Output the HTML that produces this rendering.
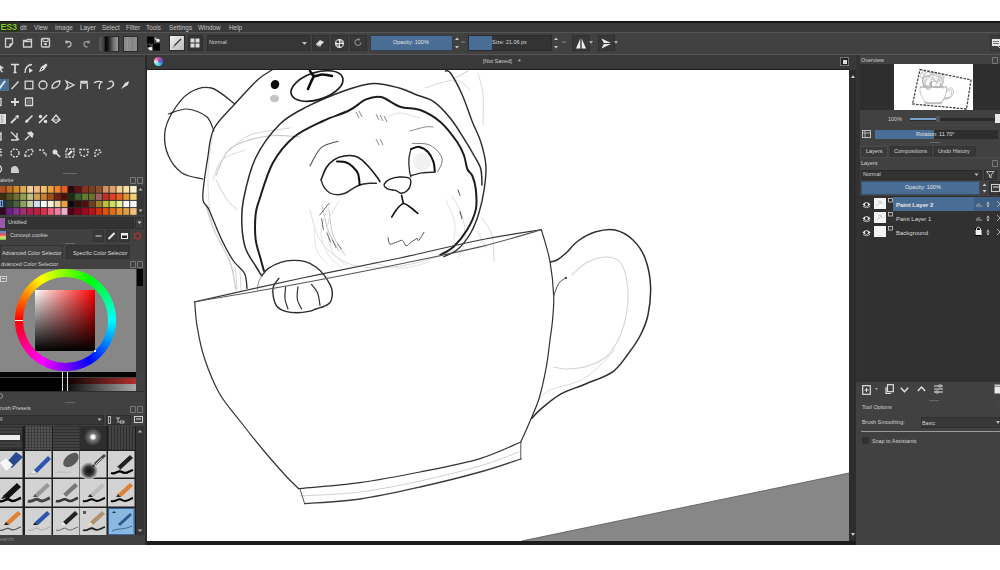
<!DOCTYPE html>
<html><head><meta charset="utf-8">
<style>
*{margin:0;padding:0;box-sizing:border-box}
html,body{width:1000px;height:570px;overflow:hidden;background:#fff;font-family:"Liberation Sans",sans-serif}
.a{position:absolute}
.t{position:absolute;white-space:nowrap;line-height:1}
svg{overflow:visible}
</style></head><body>
<div class="a" style="left:0px;top:21px;width:1000px;height:524px;background:#3a3a3a;"></div>
<div class="a" style="left:0px;top:21px;width:1000px;height:11px;background:#393939;border-top:2px solid #161616"></div>
<div class="a" style="left:0px;top:22px;width:20px;height:10px;background:#2a3420;"></div>
<div class="t" style="left:0.5px;top:22.5px;font-size:9px;color:#8cc43a;font-weight:bold;letter-spacing:-0.3px;text-shadow:0 0 1px #000">ES3</div>
<div class="t" style="left:20px;top:25px;font-size:6.4px;color:#c4c4c4;">dit</div>
<div class="t" style="left:34px;top:25px;font-size:6.4px;color:#c4c4c4;">View</div>
<div class="t" style="left:55px;top:25px;font-size:6.4px;color:#c4c4c4;">Image</div>
<div class="t" style="left:80px;top:25px;font-size:6.4px;color:#c4c4c4;">Layer</div>
<div class="t" style="left:102px;top:25px;font-size:6.4px;color:#c4c4c4;">Select</div>
<div class="t" style="left:126px;top:25px;font-size:6.4px;color:#c4c4c4;">Filter</div>
<div class="t" style="left:146px;top:25px;font-size:6.4px;color:#c4c4c4;">Tools</div>
<div class="t" style="left:169px;top:25px;font-size:6.4px;color:#c4c4c4;">Settings</div>
<div class="t" style="left:198px;top:25px;font-size:6.4px;color:#c4c4c4;">Window</div>
<div class="t" style="left:229px;top:25px;font-size:6.4px;color:#c4c4c4;">Help</div>
<div class="a" style="left:0px;top:32px;width:1000px;height:23px;background:#414141;border-top:1px solid #545454"></div>
<div class="a" style="left:0px;top:54px;width:1000px;height:1px;background:#565656;"></div>
<svg class="a" style="left:4px;top:37px;" width="10" height="11" viewBox="0 0 10 11"><path d="M1.5 1.5h7v5l-3 3.5h-4z" fill="none" stroke="#cfcfcf" stroke-width="1.3"/><path d="M5.5 10l3-3.5h-3z" fill="#eee"/></svg>
<svg class="a" style="left:22px;top:37px;" width="11" height="11" viewBox="0 0 11 11"><path d="M1.5 3.5h3l1 -1h4v7.5h-8z" fill="none" stroke="#cfcfcf" stroke-width="1.3"/><path d="M1.5 4.5h8" stroke="#cfcfcf" stroke-width="1.3"/></svg>
<svg class="a" style="left:40px;top:37px;" width="11" height="11" viewBox="0 0 11 11"><rect x="1.5" y="1.5" width="8" height="8.5" rx="1" fill="none" stroke="#cfcfcf" stroke-width="1.3"/><path d="M3 2v2.5h5V2" fill="none" stroke="#cfcfcf" stroke-width="1"/><circle cx="5.5" cy="7" r="1.3" fill="#ddd"/></svg>
<svg class="a" style="left:64px;top:38px;" width="9" height="10" viewBox="0 0 9 10"><path d="M2 2.5 v2 h2 M2 4.5 C3 3 7 3 7 6 C7 8.5 5 9 3.5 9" fill="none" stroke="#bdbdbd" stroke-width="1.3"/></svg>
<svg class="a" style="left:82px;top:38px;" width="9" height="10" viewBox="0 0 9 10"><path d="M7 2.5 v2 h-2 M7 4.5 C6 3 2 3 2 6 C2 8.5 4 9 5.5 9" fill="none" stroke="#9a9a9a" stroke-width="1.3"/></svg>
<div class="a" style="left:99px;top:37px;width:3px;height:14px;background:#555;"></div>
<div class="a" style="left:104px;top:36px;width:15px;height:16px;background:linear-gradient(90deg,#050505,#111 20%,#777 70%,#999);border:1px solid #2a2a2a"></div>
<div class="a" style="left:123px;top:36px;width:15px;height:16px;background:#8a8a8a;border:1px solid #2a2a2a"></div>
<div class="a" style="left:127px;top:37px;width:1px;height:14px;background:#9a9a9a;"></div>
<div class="a" style="left:132px;top:37px;width:1px;height:14px;background:#7e7e7e;"></div>
<svg class="a" style="left:147px;top:36px;" width="13" height="15" viewBox="0 0 13 15"><rect x="0" y="0.5" width="7" height="7" fill="#000"/><rect x="6" y="7.5" width="7" height="7" fill="#000"/><path d="M7.5 1 l3 2.5 -2 0.5z" fill="#eee"/><circle cx="11" cy="4.5" r="1.8" fill="#eee"/><path d="M1 11.5 a3 3 0 0 0 4.5 2.5 l-0.5 -3z" fill="#eee"/><circle cx="1.5" cy="10" r="1.2" fill="#000"/></svg>
<div class="a" style="left:169px;top:35px;width:16px;height:16px;background:linear-gradient(135deg,#f2f2f2,#cfcfcf 60%,#bbb);border:1px solid #2a2a2a"></div>
<svg class="a" style="left:171px;top:37px;" width="12" height="12" viewBox="0 0 12 12"><path d="M3 9 L10 2" stroke="#333" stroke-width="1.3"/><path d="M2 11 l2-3" stroke="#888" stroke-width="1"/></svg>
<div class="a" style="left:188px;top:35px;width:15px;height:16px;background:#353535;border:1px solid #2e2e2e"></div>
<svg class="a" style="left:190px;top:38px;" width="11" height="10" viewBox="0 0 11 10"><rect x="0.5" y="0.5" width="4" height="4" fill="#ddd"/><rect x="5.5" y="0.5" width="4" height="4" fill="#ddd"/><rect x="0.5" y="5.5" width="4" height="4" fill="#ddd"/><rect x="5.5" y="5.5" width="4" height="4" fill="#ddd"/></svg>
<div class="a" style="left:207px;top:35px;width:103px;height:16px;background:#363636;border:1px solid #2e2e2e"></div>
<div class="t" style="left:209px;top:40px;font-size:5.5px;color:#c9c9c9;">Normal</div>
<svg class="a" style="left:302px;top:42px;" width="5" height="3" viewBox="0 0 5 3"><path d="M0 0h5l-2.5 3z" fill="#bbb"/></svg>
<div class="a" style="left:312px;top:35px;width:17px;height:16px;background:#383838;border:1px solid #303030"></div>
<svg class="a" style="left:315px;top:38px;" width="10" height="9" viewBox="0 0 10 9"><path d="M1 6 L5 2 L9 4 L5 8z" fill="#e0e0e0"/><path d="M1 6 L3 8 h3" stroke="#bbb" fill="none"/></svg>
<div class="a" style="left:331px;top:35px;width:17px;height:16px;background:#383838;border:1px solid #303030"></div>
<svg class="a" style="left:334px;top:38px;" width="11" height="11" viewBox="0 0 11 11"><circle cx="5.5" cy="5.5" r="4.5" fill="#e8e8e8"/><rect x="2.5" y="2.5" width="2.5" height="2.5" fill="#333"/><rect x="6" y="6" width="2.5" height="2.5" fill="#333"/><rect x="6" y="2.5" width="2.5" height="2.5" fill="#888"/><rect x="2.5" y="6" width="2.5" height="2.5" fill="#888"/></svg>
<div class="a" style="left:350px;top:35px;width:17px;height:16px;background:#383838;border:1px solid #303030"></div>
<svg class="a" style="left:354px;top:38px;" width="9" height="9" viewBox="0 0 9 9"><path d="M7 4.5 A3 3 0 1 1 5 1.5" fill="none" stroke="#8c8c8c" stroke-width="1.2"/><path d="M4 0 l2.5 1.5 -2.5 1.5z" fill="#8c8c8c"/></svg>
<div class="a" style="left:370px;top:35px;width:83px;height:16px;background:#4a6d96;border:1px solid #2f3d4c"></div>
<div class="t" style="left:393px;top:40px;font-size:5.5px;color:#e6e6e6;">Opacity: 100%</div>
<svg class="a" style="left:454px;top:36px;" width="6" height="14" viewBox="0 0 6 14"><path d="M1 4 l2-2.5 2 2.5z M1 10 l2 2.5 2-2.5z" fill="#c8c8c8"/></svg>
<svg class="a" style="left:461px;top:42px;" width="4" height="2" viewBox="0 0 4 2"><path d="M0 0h4" stroke="#888"/></svg>
<div class="a" style="left:468px;top:35px;width:84px;height:16px;background:#333;border:1px solid #2a2a2a"></div>
<div class="a" style="left:469px;top:36px;width:23px;height:14px;background:#4a6d96;"></div>
<div class="t" style="left:492px;top:40px;font-size:5.5px;color:#d8d8d8;">Size: 21.06 px</div>
<svg class="a" style="left:553px;top:36px;" width="6" height="14" viewBox="0 0 6 14"><path d="M1 4 l2-2.5 2 2.5z M1 10 l2 2.5 2-2.5z" fill="#c8c8c8"/></svg>
<svg class="a" style="left:562px;top:42px;" width="4" height="2" viewBox="0 0 4 2"><path d="M0 0h4" stroke="#888"/></svg>
<div class="a" style="left:572px;top:35px;width:18px;height:16px;background:#383838;border:1px solid #303030"></div>
<svg class="a" style="left:575px;top:38px;" width="12" height="11" viewBox="0 0 12 11"><path d="M5.3 0.5 L1 10.5 H5.3z M6.7 0.5 L11 10.5 H6.7z" fill="#ededed"/></svg>
<svg class="a" style="left:589px;top:41px;" width="4" height="3" viewBox="0 0 4 3"><path d="M0 0h4l-2 3z" fill="#aaa"/></svg>
<div class="a" style="left:598px;top:35px;width:17px;height:16px;background:#383838;border:1px solid #303030"></div>
<svg class="a" style="left:601px;top:38px;" width="12" height="11" viewBox="0 0 12 11"><path d="M0.5 0.5 L11 5.5 L0.5 10.5 L3 5.5z" fill="#ededed"/><path d="M0.5 5.5 H11" stroke="#383838" stroke-width="1"/></svg>
<svg class="a" style="left:614px;top:41px;" width="4" height="3" viewBox="0 0 4 3"><path d="M0 0h4l-2 3z" fill="#aaa"/></svg>
<div class="a" style="left:990px;top:35px;width:10px;height:16px;background:#3e3e3e;border:1px solid #333"></div>
<svg class="a" style="left:992px;top:39px;" width="8" height="9" viewBox="0 0 8 9"><rect x="0" y="0" width="8" height="7" fill="#e6e6e6"/><path d="M1 2.5h6 M1 4.5h6" stroke="#555" stroke-width="0.8"/><path d="M6 7 l2 2" stroke="#ccc"/></svg>
<div class="a" style="left:0px;top:55px;width:145px;height:490px;background:#414141;"></div>
<div class="a" style="left:145px;top:55px;width:2px;height:490px;background:#2b2b2b;"></div>
<div class="a" style="left:0px;top:55px;width:143px;height:2px;background:#383838;"></div>
<svg class="a" style="left:-4.5px;top:62.0px;" width="12" height="12" viewBox="0 0 12 12"><path d="M2 2 L8 6 L5 7 L7 10 L5.5 10.5 L4 8 L2 10z" fill="#dcdcdc"/></svg>
<svg class="a" style="left:9.0px;top:62.0px;" width="12" height="12" viewBox="0 0 12 12"><path d="M2 2.5h8 M6 2.5v8 M4.5 10.5h3" stroke="#e0e0e0" stroke-width="1.6" fill="none"/></svg>
<svg class="a" style="left:23.0px;top:62.0px;" width="12" height="12" viewBox="0 0 12 12"><path d="M2 11 C2 6 4 3 9 2.5" stroke="#dcdcdc" stroke-width="1.3" fill="none"/><path d="M6 6 l4 2.5 -4 2.5z" fill="#dcdcdc"/></svg>
<svg class="a" style="left:36.5px;top:62.0px;" width="12" height="12" viewBox="0 0 12 12"><path d="M2 10 L4 5 L9 1.5 L10.5 3 L7 8z" fill="#dcdcdc"/><path d="M4 8 l2-2" stroke="#3c3c3c" stroke-width="1"/></svg>
<div class="a" style="left:0px;top:79px;width:9px;height:12px;background:#4d6f93;"></div>
<svg class="a" style="left:-4.5px;top:79.0px;" width="12" height="12" viewBox="0 0 12 12"><path d="M3 10 L9 2" stroke="#e8f0f8" stroke-width="1.8"/></svg>
<svg class="a" style="left:9.0px;top:79.0px;" width="12" height="12" viewBox="0 0 12 12"><path d="M2.5 10 L9.5 2.5" stroke="#d8d8d8" stroke-width="1.5"/></svg>
<svg class="a" style="left:23.0px;top:79.0px;" width="12" height="12" viewBox="0 0 12 12"><rect x="2.2" y="2.2" width="7.6" height="7.6" stroke="#dcdcdc" stroke-width="1.3" fill="none" stroke-width="1.6"/></svg>
<svg class="a" style="left:36.5px;top:79.0px;" width="12" height="12" viewBox="0 0 12 12"><circle cx="6" cy="6" r="4" stroke="#dcdcdc" stroke-width="1.3" fill="none" stroke-width="1.6"/></svg>
<svg class="a" style="left:50.0px;top:79.0px;" width="12" height="12" viewBox="0 0 12 12"><path d="M2 9 C2 4 6 2 10 2 C10 6 7 10 2 9z" stroke="#dcdcdc" stroke-width="1.3" fill="none" stroke-width="1.5"/></svg>
<svg class="a" style="left:64.0px;top:79.0px;" width="12" height="12" viewBox="0 0 12 12"><path d="M2 2 L10 6 L2 10 L4 6z" stroke="#dcdcdc" stroke-width="1.3" fill="none" stroke-width="1.5"/></svg>
<svg class="a" style="left:78.0px;top:79.0px;" width="12" height="12" viewBox="0 0 12 12"><path d="M2.5 10 L3 2.5 L9 2.5 L9.5 10 M3 2.5 C5 5 7 5 9 2.5" stroke="#dcdcdc" stroke-width="1.3" fill="none" stroke-width="1.5"/></svg>
<svg class="a" style="left:91.5px;top:79.0px;" width="12" height="12" viewBox="0 0 12 12"><path d="M2 4 C4 2 8 2 10 3 C8 4 7 7 7.5 10" stroke="#dcdcdc" stroke-width="1.3" fill="none" stroke-width="1.5"/></svg>
<svg class="a" style="left:105.0px;top:79.0px;" width="12" height="12" viewBox="0 0 12 12"><path d="M2 10 C6 9 10 7 8 3 C7 2 5 2 4 3" stroke="#dcdcdc" stroke-width="1.3" fill="none" stroke-width="1.5"/></svg>
<svg class="a" style="left:119.0px;top:79.0px;" width="12" height="12" viewBox="0 0 12 12"><path d="M2 10 L6 4 L10 2 L9 6z M3 6 l4 0" fill="#dcdcdc"/></svg>
<svg class="a" style="left:-4.5px;top:96.0px;" width="12" height="12" viewBox="0 0 12 12"><rect x="-3" y="2.5" width="8" height="7" stroke="#dcdcdc" stroke-width="1.3" fill="none" stroke-width="1.5"/><circle cx="1" cy="6" r="0.8" fill="#dcdcdc"/></svg>
<svg class="a" style="left:9.0px;top:96.0px;" width="12" height="12" viewBox="0 0 12 12"><path d="M6 2 V10 M2 6 H10" stroke="#dcdcdc" stroke-width="1.8"/></svg>
<svg class="a" style="left:23.0px;top:96.0px;" width="12" height="12" viewBox="0 0 12 12"><path d="M2.5 2 V9.5 H10 M2.5 2 H9.5 V10" stroke="#dcdcdc" stroke-width="1.3" fill="none" stroke-width="1.5"/><rect x="4" y="3.5" width="4" height="4.5" fill="#dcdcdc" opacity="0.3"/></svg>
<div class="a" style="left:0;top:114px;width:6px;height:10px;background:linear-gradient(90deg,#aaa,#eee);border:1px solid #ddd"></div>
<svg class="a" style="left:9.0px;top:113.0px;" width="12" height="12" viewBox="0 0 12 12"><path d="M2 10 L7 5" stroke="#dcdcdc" stroke-width="1.8"/><path d="M6 3 L9 2 L10 3 L9 6 z" fill="#dcdcdc"/></svg>
<svg class="a" style="left:23.0px;top:113.0px;" width="12" height="12" viewBox="0 0 12 12"><path d="M2.5 9.5 L9.5 2.5" stroke="#dcdcdc" stroke-width="1.6"/><circle cx="4" cy="8" r="1.6" fill="#dcdcdc"/></svg>
<svg class="a" style="left:36.5px;top:113.0px;" width="12" height="12" viewBox="0 0 12 12"><path d="M2 10 L10 2" stroke="#e4e4e4" stroke-width="1.6"/><circle cx="3.5" cy="3.5" r="1.8" fill="#dcdcdc"/><circle cx="8.5" cy="8.5" r="1.8" fill="#dcdcdc"/></svg>
<svg class="a" style="left:50.0px;top:113.0px;" width="12" height="12" viewBox="0 0 12 12"><path d="M6 2 L10 7 L6 10 L2 7z" stroke="#dcdcdc" stroke-width="1.3" fill="none" stroke-width="1.5"/><path d="M2 7 h8" stroke="#dcdcdc"/></svg>
<svg class="a" style="left:-4.5px;top:130.0px;" width="12" height="12" viewBox="0 0 12 12"><path d="M-2 10 L5 3 L5 10z" stroke="#dcdcdc" stroke-width="1.3" fill="none" stroke-width="1.4"/></svg>
<svg class="a" style="left:9.0px;top:130.0px;" width="12" height="12" viewBox="0 0 12 12"><path d="M2 2 L10 10 M8 3 V10 H2" stroke="#dcdcdc" stroke-width="1.3" fill="none" stroke-width="1.5"/></svg>
<svg class="a" style="left:23.0px;top:130.0px;" width="12" height="12" viewBox="0 0 12 12"><path d="M2 10 L6 6 M5 3 L9 7 L10 4 L8 2z" fill="#dcdcdc" stroke="#dcdcdc" stroke-width="1.3"/></svg>
<svg class="a" style="left:-4.5px;top:147.0px;" width="12" height="12" viewBox="0 0 12 12"><rect x="-3" y="2.5" width="8" height="7" stroke="#dcdcdc" stroke-width="1.4" fill="none" stroke-dasharray="2 1.2"/></svg>
<svg class="a" style="left:9.0px;top:147.0px;" width="12" height="12" viewBox="0 0 12 12"><circle cx="6" cy="6" r="4" stroke="#dcdcdc" stroke-width="1.4" fill="none" stroke-dasharray="2 1.2"/></svg>
<svg class="a" style="left:23.0px;top:147.0px;" width="12" height="12" viewBox="0 0 12 12"><path d="M2 9 C2 4 5 2 10 2.5 C10 7 7 10 2 9z" stroke="#dcdcdc" stroke-width="1.4" fill="none" stroke-dasharray="2 1.2"/></svg>
<svg class="a" style="left:36.5px;top:147.0px;" width="12" height="12" viewBox="0 0 12 12"><path d="M2 3 H6 L7 6 H9 V10" stroke="#dcdcdc" stroke-width="1.4" fill="none" stroke-dasharray="2 1.2"/></svg>
<svg class="a" style="left:50.0px;top:147.0px;" width="12" height="12" viewBox="0 0 12 12"><circle cx="5" cy="5" r="2.5" fill="#dcdcdc"/><path d="M6.5 6.5 L10 10" stroke="#dcdcdc" stroke-width="1.6"/></svg>
<svg class="a" style="left:64.0px;top:147.0px;" width="12" height="12" viewBox="0 0 12 12"><rect x="2" y="2" width="8" height="8" stroke="#dcdcdc" stroke-width="1.4" fill="none" stroke-dasharray="2 1.2"/><path d="M4 8 L8 4" stroke="#eee" stroke-width="2"/></svg>
<svg class="a" style="left:78.0px;top:147.0px;" width="12" height="12" viewBox="0 0 12 12"><path d="M2 2.5 H10 V7 C8 10 4 10 2 7z" stroke="#dcdcdc" stroke-width="1.4" fill="none" stroke-dasharray="2 1.2"/></svg>
<svg class="a" style="left:91.5px;top:147.0px;" width="12" height="12" viewBox="0 0 12 12"><path d="M3 10 V5 C3 2 9 2 9 5 L4 9" stroke="#dcdcdc" stroke-width="1.4" fill="none" stroke-dasharray="2 1.2"/></svg>
<svg class="a" style="left:-4.5px;top:163.0px;" width="12" height="12" viewBox="0 0 12 12"><circle cx="2" cy="6" r="3.5" stroke="#dcdcdc" stroke-width="1.3" fill="none"/></svg>
<svg class="a" style="left:9.0px;top:163.0px;" width="12" height="12" viewBox="0 0 12 12"><path d="M2 10 V6 C2 4 4 3 6 3 C8 3 10 5 10 10z" fill="#dcdcdc" opacity="0.9"/></svg>
<div class="a" style="left:63px;top:173px;width:14px;height:1px;background:#6a6a6a;"></div>
<div class="t" style="left:0px;top:178px;font-size:5.5px;color:#d0d0d0;">alette</div>
<svg class="a" style="left:130px;top:177px;" width="13" height="8" viewBox="0 0 13 8"><path d="M0.5 0.5h5v6h-5z M7.5 0.5h5v6h-5z" fill="none" stroke="#777" stroke-width="1"/></svg>
<svg class="a" style="left:0px;top:185.7px;" width="138" height="29" viewBox="0 0 138 29"><rect width="138" height="29" fill="#2a2a2a"/><rect x="-0.80" y="0.00" width="6.92" height="7.25" fill="#b05020"/><rect x="6.07" y="0.00" width="6.92" height="7.25" fill="#c06a20"/><rect x="12.94" y="0.00" width="6.92" height="7.25" fill="#d08a30"/><rect x="19.81" y="0.00" width="6.92" height="7.25" fill="#e0a850"/><rect x="26.68" y="0.00" width="6.92" height="7.25" fill="#f0d090"/><rect x="33.55" y="0.00" width="6.92" height="7.25" fill="#f0b880"/><rect x="40.42" y="0.00" width="6.92" height="7.25" fill="#f0c070"/><rect x="47.29" y="0.00" width="6.92" height="7.25" fill="#e8a040"/><rect x="54.16" y="0.00" width="6.92" height="7.25" fill="#f08030"/><rect x="61.03" y="0.00" width="6.92" height="7.25" fill="#e06020"/><rect x="67.90" y="0.00" width="6.92" height="7.25" fill="#300808"/><rect x="74.77" y="0.00" width="6.92" height="7.25" fill="#601010"/><rect x="81.64" y="0.00" width="6.92" height="7.25" fill="#8a3020"/><rect x="88.51" y="0.00" width="6.92" height="7.25" fill="#7a4020"/><rect x="95.38" y="0.00" width="6.92" height="7.25" fill="#8a5030"/><rect x="102.25" y="0.00" width="6.92" height="7.25" fill="#d09060"/><rect x="109.12" y="0.00" width="6.92" height="7.25" fill="#e0a070"/><rect x="115.99" y="0.00" width="6.92" height="7.25" fill="#f0d090"/><rect x="122.86" y="0.00" width="6.92" height="7.25" fill="#f8e0a0"/><rect x="129.73" y="0.00" width="6.92" height="7.25" fill="#fff0d0"/><rect x="-0.80" y="7.20" width="6.92" height="7.25" fill="#3a3010"/><rect x="6.07" y="7.20" width="6.92" height="7.25" fill="#5a5020"/><rect x="12.94" y="7.20" width="6.92" height="7.25" fill="#707030"/><rect x="19.81" y="7.20" width="6.92" height="7.25" fill="#90a050"/><rect x="26.68" y="7.20" width="6.92" height="7.25" fill="#c0c080"/><rect x="33.55" y="7.20" width="6.92" height="7.25" fill="#d0a050"/><rect x="40.42" y="7.20" width="6.92" height="7.25" fill="#c88030"/><rect x="47.29" y="7.20" width="6.92" height="7.25" fill="#a05010"/><rect x="54.16" y="7.20" width="6.92" height="7.25" fill="#702010"/><rect x="61.03" y="7.20" width="6.92" height="7.25" fill="#501008"/><rect x="67.90" y="7.20" width="6.92" height="7.25" fill="#1a3010"/><rect x="74.77" y="7.20" width="6.92" height="7.25" fill="#406030"/><rect x="81.64" y="7.20" width="6.92" height="7.25" fill="#608030"/><rect x="88.51" y="7.20" width="6.92" height="7.25" fill="#707030"/><rect x="95.38" y="7.20" width="6.92" height="7.25" fill="#a06060"/><rect x="102.25" y="7.20" width="6.92" height="7.25" fill="#c03020"/><rect x="109.12" y="7.20" width="6.92" height="7.25" fill="#e04020"/><rect x="115.99" y="7.20" width="6.92" height="7.25" fill="#e86020"/><rect x="122.86" y="7.20" width="6.92" height="7.25" fill="#e89030"/><rect x="129.73" y="7.20" width="6.92" height="7.25" fill="#f0d070"/><rect x="-0.80" y="14.40" width="6.92" height="7.25" fill="#203050"/><rect x="6.07" y="14.40" width="6.92" height="7.25" fill="#304030"/><rect x="12.94" y="14.40" width="6.92" height="7.25" fill="#4a6040"/><rect x="19.81" y="14.40" width="6.92" height="7.25" fill="#90a060"/><rect x="26.68" y="14.40" width="6.92" height="7.25" fill="#c8d0a0"/><rect x="33.55" y="14.40" width="6.92" height="7.25" fill="#d0e0f0"/><rect x="40.42" y="14.40" width="6.92" height="7.25" fill="#f8f8f8"/><rect x="47.29" y="14.40" width="6.92" height="7.25" fill="#f8f0d8"/><rect x="54.16" y="14.40" width="6.92" height="7.25" fill="#f0d0a0"/><rect x="61.03" y="14.40" width="6.92" height="7.25" fill="#e8a040"/><rect x="67.90" y="14.40" width="6.92" height="7.25" fill="#100808"/><rect x="74.77" y="14.40" width="6.92" height="7.25" fill="#301008"/><rect x="81.64" y="14.40" width="6.92" height="7.25" fill="#501010"/><rect x="88.51" y="14.40" width="6.92" height="7.25" fill="#704020"/><rect x="95.38" y="14.40" width="6.92" height="7.25" fill="#a08030"/><rect x="102.25" y="14.40" width="6.92" height="7.25" fill="#c0c040"/><rect x="109.12" y="14.40" width="6.92" height="7.25" fill="#d0e060"/><rect x="115.99" y="14.40" width="6.92" height="7.25" fill="#e8f0a0"/><rect x="122.86" y="14.40" width="6.92" height="7.25" fill="#f8f8f8"/><rect x="129.73" y="14.40" width="6.92" height="7.25" fill="#f8f8f8"/><rect x="-0.80" y="21.60" width="6.92" height="7.25" fill="#300820"/><rect x="6.07" y="21.60" width="6.92" height="7.25" fill="#6a2080"/><rect x="12.94" y="21.60" width="6.92" height="7.25" fill="#8a3090"/><rect x="19.81" y="21.60" width="6.92" height="7.25" fill="#a03070"/><rect x="26.68" y="21.60" width="6.92" height="7.25" fill="#b02050"/><rect x="33.55" y="21.60" width="6.92" height="7.25" fill="#c02040"/><rect x="40.42" y="21.60" width="6.92" height="7.25" fill="#e03050"/><rect x="47.29" y="21.60" width="6.92" height="7.25" fill="#e86080"/><rect x="54.16" y="21.60" width="6.92" height="7.25" fill="#f080a0"/><rect x="61.03" y="21.60" width="6.92" height="7.25" fill="#f0b0d0"/><rect x="67.90" y="21.60" width="6.92" height="7.25" fill="#500010"/><rect x="74.77" y="21.60" width="6.92" height="7.25" fill="#800018"/><rect x="81.64" y="21.60" width="6.92" height="7.25" fill="#a00820"/><rect x="88.51" y="21.60" width="6.92" height="7.25" fill="#c01010"/><rect x="95.38" y="21.60" width="6.92" height="7.25" fill="#d03010"/><rect x="102.25" y="21.60" width="6.92" height="7.25" fill="#e05010"/><rect x="109.12" y="21.60" width="6.92" height="7.25" fill="#e07020"/><rect x="115.99" y="21.60" width="6.92" height="7.25" fill="#e89030"/><rect x="122.86" y="21.60" width="6.92" height="7.25" fill="#e0a040"/><rect x="129.73" y="21.60" width="6.92" height="7.25" fill="#f0c080"/><path d="M6.07 0V29" stroke="#2a2a2a" stroke-width="0.9"/><path d="M12.94 0V29" stroke="#2a2a2a" stroke-width="0.9"/><path d="M19.81 0V29" stroke="#2a2a2a" stroke-width="0.9"/><path d="M26.68 0V29" stroke="#2a2a2a" stroke-width="0.9"/><path d="M33.55 0V29" stroke="#2a2a2a" stroke-width="0.9"/><path d="M40.42 0V29" stroke="#2a2a2a" stroke-width="0.9"/><path d="M47.29 0V29" stroke="#2a2a2a" stroke-width="0.9"/><path d="M54.16 0V29" stroke="#2a2a2a" stroke-width="0.9"/><path d="M61.03 0V29" stroke="#2a2a2a" stroke-width="0.9"/><path d="M67.90 0V29" stroke="#2a2a2a" stroke-width="0.9"/><path d="M74.77 0V29" stroke="#2a2a2a" stroke-width="0.9"/><path d="M81.64 0V29" stroke="#2a2a2a" stroke-width="0.9"/><path d="M88.51 0V29" stroke="#2a2a2a" stroke-width="0.9"/><path d="M95.38 0V29" stroke="#2a2a2a" stroke-width="0.9"/><path d="M102.25 0V29" stroke="#2a2a2a" stroke-width="0.9"/><path d="M109.12 0V29" stroke="#2a2a2a" stroke-width="0.9"/><path d="M115.99 0V29" stroke="#2a2a2a" stroke-width="0.9"/><path d="M122.86 0V29" stroke="#2a2a2a" stroke-width="0.9"/><path d="M129.73 0V29" stroke="#2a2a2a" stroke-width="0.9"/><path d="M0 7.20H138" stroke="#2a2a2a" stroke-width="0.9"/><path d="M0 14.40H138" stroke="#2a2a2a" stroke-width="0.9"/><path d="M0 21.60H138" stroke="#2a2a2a" stroke-width="0.9"/></svg>
<div class="a" style="left:0px;top:199.5px;width:3px;height:7px;background:none;border:1px solid #7aa0d0"></div>
<div class="a" style="left:137px;top:186px;width:7px;height:29px;background:#363636;"></div>
<svg class="a" style="left:138px;top:187px;" width="5" height="4" viewBox="0 0 5 4"><path d="M0.5 3.5 L2.5 1 L4.5 3.5z" fill="#bbb"/></svg>
<svg class="a" style="left:138px;top:209px;" width="5" height="4" viewBox="0 0 5 4"><path d="M0.5 0.5 L2.5 3 L4.5 0.5z" fill="#bbb"/></svg>
<div class="a" style="left:0px;top:217px;width:134px;height:12px;background:#333;border:1px solid #2e2e2e"></div>
<div class="a" style="left:0px;top:218px;width:5px;height:10px;background:#9a5aa8;"></div>
<div class="t" style="left:8px;top:219.5px;font-size:5.5px;color:#d8d8d8;">Untitled</div>
<div class="a" style="left:135px;top:217px;width:9px;height:12px;background:#3e3e3e;border:1px solid #2e2e2e"></div>
<svg class="a" style="left:137px;top:221px;" width="5" height="4" viewBox="0 0 5 4"><path d="M0.5 0.5 L2.5 3 L4.5 0.5z" fill="#ccc"/></svg>
<div class="a" style="left:0px;top:230px;width:143px;height:12px;background:#404040;"></div>
<div class="a" style="left:0;top:231px;width:6px;height:9px;background:linear-gradient(180deg,#4a9ad0 0%,#e05070 40%,#f0e060 70%,#60c060 100%)"></div>
<div class="t" style="left:10px;top:233px;font-size:5.5px;color:#d0d0d0;">Concept cookie</div>
<div class="a" style="left:93px;top:230px;width:11px;height:12px;background:#383838;border:1px solid #333"></div>
<svg class="a" style="left:94px;top:232px;" width="9" height="8" viewBox="0 0 9 8"><path d="M1.5 4 H7.5" stroke="#bbb" stroke-width="1.2"/></svg>
<div class="a" style="left:106px;top:230px;width:11px;height:12px;background:#383838;border:1px solid #333"></div>
<svg class="a" style="left:107px;top:232px;" width="9" height="8" viewBox="0 0 9 8"><path d="M1.5 7 L7.5 1" stroke="#e8e8e8" stroke-width="2"/></svg>
<div class="a" style="left:119px;top:230px;width:11px;height:12px;background:#383838;border:1px solid #333"></div>
<svg class="a" style="left:120px;top:232px;" width="9" height="8" viewBox="0 0 9 8"><rect x="1" y="1" width="7" height="6" fill="#eee"/><rect x="2" y="3.5" width="5" height="2.5" fill="#222"/></svg>
<svg class="a" style="left:133px;top:232px;" width="9" height="8" viewBox="0 0 9 8"><circle cx="4.5" cy="4" r="3" fill="none" stroke="#c03030" stroke-width="1.2"/></svg>
<div class="a" style="left:65px;top:243px;width:10px;height:1px;background:#666;"></div>
<div class="a" style="left:0px;top:245px;width:63px;height:14px;background:#434343;border:1px solid #333;border-bottom:none"></div>
<div class="t" style="left:2px;top:250.5px;font-size:5.4px;color:#d8d8d8;">Advanced Color Selector</div>
<div class="a" style="left:66px;top:245px;width:64px;height:14px;background:#363636;border:1px solid #303030"></div>
<div class="t" style="left:73px;top:250.5px;font-size:5.4px;color:#d8d8d8;">Specific Color Selector</div>
<div class="a" style="left:0px;top:259px;width:143px;height:1px;background:#444;"></div>
<div class="t" style="left:1px;top:261.5px;font-size:5.5px;color:#d0d0d0;">dvanced Color Selector</div>
<svg class="a" style="left:130px;top:261px;" width="13" height="8" viewBox="0 0 13 8"><path d="M0.5 0.5h5v6h-5z M7.5 0.5h5v6h-5z" fill="none" stroke="#777" stroke-width="1"/></svg>
<div class="a" style="left:0px;top:269px;width:136px;height:103px;background:#878787;"></div>
<div class="a" style="left:136px;top:269px;width:8px;height:103px;background:#3e3e3e;"></div>
<div class="a" style="left:137px;top:269px;width:6px;height:17px;background:#050505;"></div>
<svg class="a" style="left:0px;top:276px;" width="8" height="7" viewBox="0 0 8 7"><rect x="0.5" y="0.5" width="6" height="5" fill="none" stroke="#ddd" stroke-width="0.8"/><path d="M2 2.5h3" stroke="#ddd"/></svg>
<div class="a" style="left:14.8px;top:269.4px;width:101.6px;height:101.6px;border-radius:50%;background:conic-gradient(from 270deg,#ff0000,#ffff00,#00ff00,#00ffff,#0000ff,#ff00ff,#ff0000)"></div>
<div class="a" style="left:22.8px;top:277.4px;width:85.6px;height:85.6px;border-radius:50%;background:#878787"></div>
<div class="a" style="left:15px;top:319.5px;width:8px;height:1px;background:#f0f0f0;"></div>
<div class="a" style="left:35px;top:290px;width:60px;height:61px;background:linear-gradient(180deg,rgba(0,0,0,0),#000),linear-gradient(90deg,#fff,#f00)"></div>
<div class="a" style="left:93.5px;top:349.5px;width:2px;height:2px;background:#eee;"></div>
<div class="a" style="left:0px;top:372px;width:136px;height:5px;background:#050505;"></div>
<div class="a" style="left:0;top:377.5px;width:136px;height:6px;background:linear-gradient(90deg,#000 45%,#b03030)"></div>
<div class="a" style="left:0;top:384px;width:136px;height:7px;background:linear-gradient(90deg,#000 45%,#aaa)"></div>
<div class="a" style="left:62px;top:372px;width:1px;height:19px;background:#ddd;"></div>
<div class="a" style="left:67px;top:372px;width:1px;height:19px;background:#ddd;"></div>
<div class="a" style="left:0px;top:391px;width:144px;height:1px;background:#2e2e2e;"></div>
<svg class="a" style="left:0px;top:393px;" width="5" height="6" viewBox="0 0 5 6"><circle cx="0" cy="3" r="2.5" fill="none" stroke="#aaa" stroke-width="0.8"/></svg>
<div class="a" style="left:65px;top:402px;width:10px;height:1px;background:#666;"></div>
<div class="t" style="left:0px;top:406px;font-size:5.5px;color:#d0d0d0;">rush Presets</div>
<svg class="a" style="left:130px;top:406px;" width="13" height="8" viewBox="0 0 13 8"><path d="M0.5 0.5h5v6h-5z M7.5 0.5h5v6h-5z" fill="none" stroke="#777" stroke-width="1"/></svg>
<div class="a" style="left:0px;top:415px;width:104px;height:10px;background:#363636;border:1px solid #2e2e2e"></div>
<div class="t" style="left:0px;top:417px;font-size:5.5px;color:#ccc;">ll</div>
<svg class="a" style="left:97px;top:418px;" width="5" height="4" viewBox="0 0 5 4"><path d="M0.5 0.5 L2.5 3 L4.5 0.5z" fill="#bbb"/></svg>
<div class="a" style="left:106px;top:415px;width:25px;height:10px;background:#383838;border:1px solid #2e2e2e"></div>
<svg class="a" style="left:108px;top:416px;" width="22" height="8" viewBox="0 0 22 8"><rect x="0.5" y="0.5" width="2" height="7" fill="none" stroke="#ccc" stroke-width="0.8"/><path d="M8 2h4 M10 2v5 M12 5h4v2h-4z" stroke="#ccc" stroke-width="0.9" fill="none"/></svg>
<div class="a" style="left:133px;top:415px;width:11px;height:10px;background:#414141;"></div>
<svg class="a" style="left:134px;top:416px;" width="9" height="8" viewBox="0 0 9 8"><rect x="0.5" y="0.5" width="8" height="6" fill="none" stroke="#ddd" stroke-width="0.9"/><path d="M2 3h5" stroke="#ddd"/></svg>
<div class="a" style="left:0px;top:426px;width:136px;height:109px;background:#1e1e1e;"></div>
<svg class="a" style="left:-4px;top:426px;" width="26.5" height="23.5" viewBox="0 0 26.5 23.5"><rect width="26.5" height="23.5" fill="#333"/><rect x="0" y="9" width="24" height="5" fill="#ececec"/><path d="M0 3h26M0 6h26M0 17h26M0 20h26" stroke="#555" stroke-width="0.8"/></svg>
<svg class="a" style="left:25px;top:426px;" width="26.5" height="23.5" viewBox="0 0 26.5 23.5"><rect width="26.5" height="23.5" fill="#2e2e2e"/><path d="M2 0v24" stroke="#777" stroke-width="0.7"/><path d="M5 0v24" stroke="#777" stroke-width="0.7"/><path d="M8 0v24" stroke="#777" stroke-width="0.7"/><path d="M11 0v24" stroke="#777" stroke-width="0.7"/><path d="M14 0v24" stroke="#777" stroke-width="0.7"/><path d="M17 0v24" stroke="#777" stroke-width="0.7"/><path d="M20 0v24" stroke="#777" stroke-width="0.7"/><path d="M23 0v24" stroke="#777" stroke-width="0.7"/><path d="M26 0v24" stroke="#777" stroke-width="0.7"/><path d="M0 2h27" stroke="#666" stroke-width="0.7"/><path d="M0 5h27" stroke="#666" stroke-width="0.7"/><path d="M0 8h27" stroke="#666" stroke-width="0.7"/><path d="M0 11h27" stroke="#666" stroke-width="0.7"/><path d="M0 14h27" stroke="#666" stroke-width="0.7"/><path d="M0 17h27" stroke="#666" stroke-width="0.7"/><path d="M0 20h27" stroke="#666" stroke-width="0.7"/><path d="M0 23h27" stroke="#666" stroke-width="0.7"/></svg>
<svg class="a" style="left:52.5px;top:426px;" width="26.5" height="23.5" viewBox="0 0 26.5 23.5"><rect width="26.5" height="23.5" fill="#303030"/><path d="M0 2h27" stroke="#5a5a5a" stroke-width="0.8"/><path d="M0 5h27" stroke="#5a5a5a" stroke-width="0.8"/><path d="M0 8h27" stroke="#5a5a5a" stroke-width="0.8"/><path d="M0 11h27" stroke="#5a5a5a" stroke-width="0.8"/><path d="M0 14h27" stroke="#5a5a5a" stroke-width="0.8"/><path d="M0 17h27" stroke="#5a5a5a" stroke-width="0.8"/><path d="M0 20h27" stroke="#5a5a5a" stroke-width="0.8"/><path d="M0 23h27" stroke="#5a5a5a" stroke-width="0.8"/></svg>
<svg class="a" style="left:80px;top:426px;" width="26.5" height="23.5" viewBox="0 0 26.5 23.5"><defs><radialGradient id="gl"><stop offset="0" stop-color="#fff"/><stop offset="0.2" stop-color="#eee"/><stop offset="0.4" stop-color="#777"/><stop offset="1" stop-color="#2e2e2e"/></radialGradient></defs><rect width="26.5" height="23.5" fill="#2e2e2e"/><circle cx="13" cy="11" r="9" fill="url(#gl)"/></svg>
<svg class="a" style="left:107.5px;top:426px;" width="26.5" height="23.5" viewBox="0 0 26.5 23.5"><rect width="26.5" height="23.5" fill="#2e2e2e"/><path d="M2 0v24" stroke="#5f5f5f" stroke-width="0.9"/><path d="M5 0v24" stroke="#5f5f5f" stroke-width="0.9"/><path d="M8 0v24" stroke="#5f5f5f" stroke-width="0.9"/><path d="M11 0v24" stroke="#5f5f5f" stroke-width="0.9"/><path d="M14 0v24" stroke="#5f5f5f" stroke-width="0.9"/><path d="M17 0v24" stroke="#5f5f5f" stroke-width="0.9"/><path d="M20 0v24" stroke="#5f5f5f" stroke-width="0.9"/><path d="M23 0v24" stroke="#5f5f5f" stroke-width="0.9"/><path d="M26 0v24" stroke="#5f5f5f" stroke-width="0.9"/></svg>
<svg class="a" style="left:-4px;top:451px;" width="26.5" height="26.5" viewBox="0 0 26.5 26.5"><rect width="26.5" height="26.5" fill="#d2d2d2"/><path d="M10 12 L20 1 L27 6 L16 17z" fill="#2a4a90"/><path d="M4 12 L10 7 L17 14 L10 20z" fill="#f6f6f6"/></svg>
<svg class="a" style="left:25px;top:451px;" width="26.5" height="26.5" viewBox="0 0 26.5 26.5"><rect width="26.5" height="26.5" fill="#d2d2d2"/><path d="M9 19 L23 5 L26 8 L12 22z" fill="#2c55b0"/><path d="M8 19 l3 3 -4 1z" fill="#eee"/><path d="M3 24 C6 22 9 23 12 22" stroke="#bbb" fill="none"/></svg>
<svg class="a" style="left:52.5px;top:451px;" width="26.5" height="26.5" viewBox="0 0 26.5 26.5"><rect width="26.5" height="26.5" fill="#d2d2d2"/><ellipse cx="18" cy="9" rx="5.5" ry="9" transform="rotate(50 18 9)" fill="#5a5a5a"/><path d="M2 22 C8 20 12 22 18 21" stroke="#bbb" fill="none"/></svg>
<svg class="a" style="left:80px;top:451px;" width="26.5" height="26.5" viewBox="0 0 26.5 26.5"><rect width="26.5" height="26.5" fill="#d2d2d2"/><defs><radialGradient id="ab"><stop offset="0" stop-color="#111"/><stop offset="0.5" stop-color="#333"/><stop offset="1" stop-color="#d2d2d2"/></radialGradient></defs><circle cx="9" cy="20" r="9" fill="url(#ab)"/><path d="M14 12 L24 3 L26 5 L16 14z" fill="#444"/><path d="M12 15 l3 -2 -1 3z" fill="#222"/><path d="M16 13 l6-6" stroke="#eee" stroke-width="0.8"/></svg>
<svg class="a" style="left:107.5px;top:451px;" width="26.5" height="26.5" viewBox="0 0 26.5 26.5"><rect width="26.5" height="26.5" fill="#d2d2d2"/><path d="M9 16 L22 4 L25 7 L12 19z" fill="#222"/><path d="M7 19 l3-3 2 2z" fill="#ccc"/><path d="M3 22 C8 24 10 18 14 21 C18 24 21 20 25 19" fill="none" stroke="#000" stroke-width="2.2"/></svg>
<svg class="a" style="left:-4px;top:479px;" width="26.5" height="27.5" viewBox="0 0 26.5 27.5"><rect width="26.5" height="27.5" fill="#d2d2d2"/><path d="M7 17 L21 4 L25 8 L11 21z" fill="#111"/><path d="M5 20 l3-4 3 3z" fill="#222"/><path d="M3 22 C8 24 10 18 14 21 C18 24 21 20 25 19" fill="none" stroke="#000" stroke-width="2.4"/></svg>
<svg class="a" style="left:25px;top:479px;" width="26.5" height="27.5" viewBox="0 0 26.5 27.5"><rect width="26.5" height="27.5" fill="#d2d2d2"/><path d="M10 15 L22 4 L25 7 L13 18z" fill="#999"/><path d="M8 18 l2-3 3 3z" fill="#555"/><path d="M3 22 C8 24 10 18 14 21 C18 24 21 20 25 19" fill="none" stroke="#444" stroke-width="3"/></svg>
<svg class="a" style="left:52.5px;top:479px;" width="26.5" height="27.5" viewBox="0 0 26.5 27.5"><rect width="26.5" height="27.5" fill="#d2d2d2"/><path d="M10 15 L22 4 L25 7 L13 18z" fill="#777"/><path d="M8 18 l2-3 3 3z" fill="#ddd"/><path d="M3 22 C8 24 10 18 14 21 C18 24 21 20 25 19" fill="none" stroke="#333" stroke-width="2.5"/></svg>
<svg class="a" style="left:80px;top:479px;" width="26.5" height="27.5" viewBox="0 0 26.5 27.5"><rect width="26.5" height="27.5" fill="#d2d2d2"/><path d="M10 15 L22 4 L25 7 L13 18z" fill="#bbb"/><path d="M8 18 l2-3 3 3z" fill="#222"/><path d="M3 22 C8 24 10 18 14 21 C18 24 21 20 25 19" fill="none" stroke="#000" stroke-width="2"/></svg>
<svg class="a" style="left:107.5px;top:479px;" width="26.5" height="27.5" viewBox="0 0 26.5 27.5"><rect width="26.5" height="27.5" fill="#d2d2d2"/><path d="M10 15 L22 4 L25 7 L13 18z" fill="#e08030"/><path d="M8 18 l2-3 3 3z" fill="#333"/><path d="M3 22 C8 24 10 18 14 21 C18 24 21 20 25 19" fill="none" stroke="#000" stroke-width="2"/></svg>
<svg class="a" style="left:-4px;top:508px;" width="26.5" height="27" viewBox="0 0 26.5 27"><rect width="26.5" height="27" fill="#d2d2d2"/><path d="M10 14 L22 3 L25 6 L13 17z" fill="#e08030"/><path d="M8 17 l2-3 3 3z" fill="#222"/><path d="M3 22 C8 24 10 18 14 21 C18 24 21 20 25 19" fill="none" stroke="#555" stroke-width="1.2"/></svg>
<svg class="a" style="left:25px;top:508px;" width="26.5" height="27" viewBox="0 0 26.5 27"><rect width="26.5" height="27" fill="#d2d2d2"/><path d="M10 14 L22 3 L25 6 L13 17z" fill="#2c55b0"/><path d="M8 17 l2-3 3 3z" fill="#222"/><path d="M3 22 C8 24 10 18 14 21 C18 24 21 20 25 19" fill="none" stroke="#aaa" stroke-width="1"/></svg>
<svg class="a" style="left:52.5px;top:508px;" width="26.5" height="27" viewBox="0 0 26.5 27"><rect width="26.5" height="27" fill="#d2d2d2"/><path d="M10 14 L22 3 L25 6 L13 17z" fill="#222"/><path d="M8 17 l2-3 3 3z" fill="#eee"/><path d="M3 22 C8 24 10 18 14 21 C18 24 21 20 25 19" fill="none" stroke="#666" stroke-width="1"/></svg>
<svg class="a" style="left:80px;top:508px;" width="26.5" height="27" viewBox="0 0 26.5 27"><rect width="26.5" height="27" fill="#d2d2d2"/><path d="M10 14 L22 3 L25 6 L13 17z" fill="#b09070"/><path d="M8 17 l2-3 3 3z" fill="#f0e0b0"/><path d="M3 22 C8 24 10 18 14 21 C18 24 21 20 25 19" fill="none" stroke="#222" stroke-width="1.8"/><rect x="3" y="3" width="3" height="3" fill="#555"/></svg>
<svg class="a" style="left:107.5px;top:508px;" width="26.5" height="27" viewBox="0 0 26.5 27"><rect width="26.5" height="27" fill="#8ab8e0"/><rect x="0.5" y="0.5" width="25.5" height="26" fill="none" stroke="#3a6aa0"/><path d="M10 16 L22 5 L24 7 L12 18z" fill="#2a5a90"/><path d="M4 5 l2-2 2 2z" fill="#234"/><path d="M4 23 C10 20 16 22 24 18" stroke="#3a6a9a" fill="none"/></svg>
<div class="a" style="left:136px;top:426px;width:8px;height:109px;background:#343434;"></div>
<svg class="a" style="left:137px;top:429px;" width="6" height="4" viewBox="0 0 6 4"><path d="M0.5 3.5 L3 1 L5.5 3.5z" fill="#aaa"/></svg>
<svg class="a" style="left:137px;top:529px;" width="6" height="4" viewBox="0 0 6 4"><path d="M0.5 0.5 L3 3 L5.5 0.5z" fill="#aaa"/></svg>
<div class="t" style="left:0px;top:537px;font-size:5.5px;color:#888;">earch</div>
<div class="a" style="left:147px;top:55px;width:709px;height:15px;background:#393939;"></div>
<div class="a" style="left:147px;top:69px;width:702px;height:1px;background:#1e1e1e;"></div>
<div class="a" style="left:147px;top:70px;width:702px;height:471px;background:#fff;"></div>
<div class="a" style="left:849px;top:70px;width:7px;height:471px;background:#2d2d2d;"></div>
<div class="a" style="left:147px;top:541px;width:709px;height:4px;background:#1c1c1c;"></div>
<svg class="a" style="left:147px;top:70px;overflow:hidden" width="702" height="471" viewBox="0 0 702 471"><defs><filter id="sb" x="-5%" y="-5%" width="110%" height="110%"><feGaussianBlur stdDeviation="0.35"/></filter></defs><g transform="translate(-147 -70)" filter="url(#sb)"><path d="M521.6 541 L849 473 L849 541z" fill="#878787"/><path d="M521.6 541 L849 473" stroke="#555" stroke-width="0.8"/><path d="M216.0 175.0 C218.5 170.5 222.3 154.5 231.0 148.0 C239.7 141.5 256.5 137.8 268.0 136.0 C279.5 134.2 294.7 136.8 300.0 137.0" fill="none" stroke="#c8c8c8" stroke-width="1.2" stroke-linecap="round" stroke-linejoin="round" opacity="1"/><path d="M206.0 205.0 C207.3 209.2 210.0 220.5 214.0 230.0 C218.0 239.5 226.3 252.0 230.0 262.0 C233.7 272.0 235.0 285.3 236.0 290.0" fill="none" stroke="#c8c8c8" stroke-width="1.2" stroke-linecap="round" stroke-linejoin="round" opacity="1"/><path d="M455.0 78.0 C457.2 76.8 465.8 72.2 468.0 71.0" fill="none" stroke="#c8c8c8" stroke-width="1.0" stroke-linecap="round" stroke-linejoin="round" opacity="1"/><path d="M478.0 73.0 C478.8 76.7 482.2 86.3 483.0 95.0 C483.8 103.7 483.0 120.0 483.0 125.0" fill="none" stroke="#d8d8d8" stroke-width="1.0" stroke-linecap="round" stroke-linejoin="round" opacity="1"/><path d="M322.0 205.0 C323.0 209.2 325.2 222.3 328.0 230.0 C330.8 237.7 337.2 247.5 339.0 251.0" fill="none" stroke="#bdbdbd" stroke-width="1.0" stroke-linecap="round" stroke-linejoin="round" opacity="1"/><path d="M329.0 210.0 C329.7 214.2 330.3 227.5 333.0 235.0 C335.7 242.5 343.0 251.7 345.0 255.0" fill="none" stroke="#c8c8c8" stroke-width="1.0" stroke-linecap="round" stroke-linejoin="round" opacity="1"/><path d="M572.0 275.0 C574.3 273.0 580.5 266.0 586.0 263.0 C591.5 260.0 599.3 257.2 605.0 257.0 C610.7 256.8 616.3 257.8 620.0 262.0 C623.7 266.2 625.8 274.0 627.0 282.0 C628.2 290.0 628.2 301.0 627.0 310.0 C625.8 319.0 623.3 328.3 620.0 336.0 C616.7 343.7 612.3 351.0 607.0 356.0 C601.7 361.0 594.8 363.8 588.0 366.0 C581.2 368.2 571.7 368.8 566.0 369.0 C560.3 369.2 556.0 367.3 554.0 367.0" fill="none" stroke="#d4d4d4" stroke-width="1.1" stroke-linecap="round" stroke-linejoin="round" opacity="1"/><path d="M615.0 350.0 C610.0 354.7 595.8 371.3 585.0 378.0 C574.2 384.7 557.8 386.3 550.0 390.0 C542.2 393.7 540.0 398.3 538.0 400.0" fill="none" stroke="#dcdcdc" stroke-width="1.0" stroke-linecap="round" stroke-linejoin="round" opacity="1"/><path d="M300.0 496.0 C310.0 495.3 340.0 494.5 360.0 492.0 C380.0 489.5 400.0 485.3 420.0 481.0 C440.0 476.7 463.5 470.8 480.0 466.0 C496.5 461.2 512.5 454.3 519.0 452.0" fill="none" stroke="#d0d0d0" stroke-width="1.0" stroke-linecap="round" stroke-linejoin="round" opacity="1"/><path d="M310.0 210.0 C311.7 215.0 314.2 231.3 320.0 240.0 C325.8 248.7 335.0 257.3 345.0 262.0 C355.0 266.7 367.5 268.0 380.0 268.0 C392.5 268.0 407.5 265.0 420.0 262.0 C432.5 259.0 449.2 252.0 455.0 250.0" fill="none" stroke="#dadada" stroke-width="1.0" stroke-linecap="round" stroke-linejoin="round" opacity="1"/><path d="M230.0 150.0 C233.3 147.5 240.0 138.7 250.0 135.0 C260.0 131.3 283.3 129.2 290.0 128.0" fill="none" stroke="#d4d4d4" stroke-width="1.0" stroke-linecap="round" stroke-linejoin="round" opacity="1"/><path d="M213.0 180.0 C214.5 176.7 216.7 165.0 222.0 160.0 C227.3 155.0 241.2 151.7 245.0 150.0" fill="none" stroke="#d8d8d8" stroke-width="1.0" stroke-linecap="round" stroke-linejoin="round" opacity="1"/><path d="M482.0 218.0 C483.7 220.8 490.0 227.7 492.0 235.0 C494.0 242.3 493.7 257.5 494.0 262.0" fill="none" stroke="#d8d8d8" stroke-width="1.0" stroke-linecap="round" stroke-linejoin="round" opacity="1"/><path d="M478.0 232.0 C479.3 234.7 484.7 245.3 486.0 248.0" fill="none" stroke="#dcdcdc" stroke-width="1.0" stroke-linecap="round" stroke-linejoin="round" opacity="1"/><path d="M425.0 88.0 C430.0 86.7 447.5 79.7 455.0 80.0 C462.5 80.3 467.5 88.3 470.0 90.0" fill="none" stroke="#d8d8d8" stroke-width="1.0" stroke-linecap="round" stroke-linejoin="round" opacity="1"/><path d="M386.0 118.0 C388.3 117.2 394.3 113.0 400.0 113.0 C405.7 113.0 416.7 117.2 420.0 118.0" fill="none" stroke="#dddddd" stroke-width="1.0" stroke-linecap="round" stroke-linejoin="round" opacity="1"/><path d="M216.0 180.0 C217.8 183.2 223.1 194.1 226.6 199.0 C230.1 203.9 235.3 207.8 237.1 209.5" fill="none" stroke="#d0d0d0" stroke-width="1.0" stroke-linecap="round" stroke-linejoin="round" opacity="1"/><path d="M235.5 268.0 C235.8 271.5 236.8 285.5 237.0 289.0" fill="none" stroke="#cccccc" stroke-width="0.9" stroke-linecap="round" stroke-linejoin="round" opacity="1"/><path d="M240.0 270.0 C240.2 273.3 240.8 286.7 241.0 290.0" fill="none" stroke="#d4d4d4" stroke-width="0.9" stroke-linecap="round" stroke-linejoin="round" opacity="1"/><path d="M213.0 135.0 C212.2 141.3 208.2 158.3 208.0 173.0 C207.8 187.7 208.7 209.0 212.0 223.0 C215.3 237.0 225.3 251.3 228.0 257.0" fill="none" stroke="#e0e0e0" stroke-width="1.0" stroke-linecap="round" stroke-linejoin="round" opacity="1"/><path d="M339.0 201.0 C337.2 204.7 329.2 214.7 328.0 223.0 C326.8 231.3 329.0 244.0 332.0 251.0 C335.0 258.0 343.7 262.7 346.0 265.0" fill="none" stroke="#dedede" stroke-width="1.0" stroke-linecap="round" stroke-linejoin="round" opacity="1"/><path d="M331.0 202.0 C329.3 206.7 321.5 221.3 321.0 230.0 C320.5 238.7 324.5 247.7 328.0 254.0 C331.5 260.3 339.7 265.7 342.0 268.0" fill="none" stroke="#e2e2e2" stroke-width="1.0" stroke-linecap="round" stroke-linejoin="round" opacity="1"/><path d="M314.0 230.0 C314.5 233.5 314.7 245.2 317.0 251.0 C319.3 256.8 326.2 262.7 328.0 265.0" fill="none" stroke="#e4e4e4" stroke-width="1.0" stroke-linecap="round" stroke-linejoin="round" opacity="1"/><path d="M452.0 196.0 C453.7 199.2 459.8 207.7 462.0 215.0 C464.2 222.3 465.7 232.8 465.0 240.0 C464.3 247.2 459.2 255.0 458.0 258.0" fill="none" stroke="#dedede" stroke-width="1.0" stroke-linecap="round" stroke-linejoin="round" opacity="1"/><path d="M446.0 200.0 C447.5 204.2 454.0 216.7 455.0 225.0 C456.0 233.3 452.5 245.8 452.0 250.0" fill="none" stroke="#e2e2e2" stroke-width="1.0" stroke-linecap="round" stroke-linejoin="round" opacity="1"/><path d="M370.0 262.0 C375.0 263.0 390.0 268.0 400.0 268.0 C410.0 268.0 425.0 263.0 430.0 262.0" fill="none" stroke="#e0e0e0" stroke-width="1.0" stroke-linecap="round" stroke-linejoin="round" opacity="1"/><path d="M234.8 104.0 C230.9 101.3 219.0 89.8 211.4 88.0 C203.8 86.2 195.6 88.8 189.0 93.0 C182.4 97.2 176.1 106.2 172.0 113.0 C167.9 119.8 165.3 126.6 164.7 133.7 C164.1 140.8 165.5 149.2 168.4 155.8 C171.3 162.4 176.3 169.1 182.0 173.0 C187.7 176.9 199.3 178.0 202.8 179.0" fill="none" stroke="#303030" stroke-width="1.3" stroke-linecap="round" stroke-linejoin="round" opacity="1"/><path d="M168.4 114.0 C171.5 113.2 180.6 108.6 186.9 109.0 C193.2 109.4 202.0 112.8 206.5 116.5 C211.0 120.2 212.7 128.6 213.9 131.0" fill="none" stroke="#303030" stroke-width="1.2" stroke-linecap="round" stroke-linejoin="round" opacity="1"/><path d="M272.0 70.0 C269.7 71.6 264.2 73.9 258.0 79.6 C251.8 85.3 242.2 95.8 234.8 104.0 C227.5 112.2 218.4 119.8 213.9 128.8 C209.4 137.8 209.5 146.5 207.7 158.0 C205.8 169.5 202.6 189.0 202.8 197.6 C203.0 206.2 205.9 202.8 209.0 209.7 C212.1 216.6 217.2 230.4 221.3 239.0 C225.4 247.6 229.6 255.2 233.5 261.0 C237.4 266.8 242.3 268.9 244.6 273.5 C246.8 278.1 246.6 285.8 247.0 288.3" fill="none" stroke="#2a2a2a" stroke-width="1.3" stroke-linecap="round" stroke-linejoin="round" opacity="1"/><path d="M261.8 276.0 C260.8 274.3 258.3 270.5 255.6 266.0 C252.9 261.5 248.1 255.5 245.8 249.0 C243.5 242.5 242.4 235.1 242.0 226.9 C241.6 218.7 241.1 211.5 243.4 200.0 C245.7 188.5 249.5 170.7 255.6 158.0 C261.7 145.3 271.4 132.6 280.0 124.0 C288.6 115.5 295.9 112.4 307.0 106.7 C318.1 101.0 335.5 93.9 346.6 90.0 C357.7 86.1 364.8 83.7 373.7 83.4 C382.6 83.1 392.8 86.3 400.0 88.2 C407.2 90.1 411.2 92.8 416.8 95.0 C422.4 97.2 428.1 97.8 433.7 101.7 C439.3 105.6 445.4 112.3 450.5 118.5 C455.6 124.7 460.1 132.5 464.0 138.7 C467.9 144.9 471.2 150.4 474.0 155.5 C476.8 160.6 479.5 164.1 480.8 169.0 C482.1 173.9 481.8 182.3 482.0 185.0" fill="none" stroke="#2a2a2a" stroke-width="1.5" stroke-linecap="round" stroke-linejoin="round" opacity="1"/><path d="M264.0 271.0 C263.4 269.0 262.0 264.1 260.6 258.8 C259.2 253.5 256.4 246.4 255.6 239.0 C254.8 231.6 255.0 221.1 255.6 214.6 C256.2 208.1 256.4 208.6 259.3 200.0 C262.2 191.4 267.0 173.5 272.8 163.0 C278.6 152.5 285.6 144.0 294.0 137.0 C302.4 130.0 313.8 125.4 323.0 121.0 C332.2 116.6 341.8 114.1 349.0 110.5 C356.2 106.9 360.7 101.7 366.0 99.4 C371.3 97.2 375.3 95.8 381.0 97.0 C386.7 98.2 393.5 104.5 400.0 106.7 C406.5 108.9 413.5 107.5 420.2 110.0 C426.9 112.5 434.2 116.6 440.4 121.9 C446.6 127.2 453.3 136.4 457.2 142.0 C461.1 147.6 462.3 151.0 464.0 155.5 C465.7 160.0 465.9 165.6 467.3 169.0 C468.7 172.4 471.0 172.6 472.4 176.0 C473.8 179.4 475.2 183.6 475.8 189.2 C476.4 194.8 477.2 202.7 475.8 209.4 C474.4 216.1 471.0 223.4 467.3 229.6 C463.6 235.8 458.4 242.3 453.9 246.5 C449.4 250.7 442.6 253.5 440.4 254.9" fill="none" stroke="#1e1e1e" stroke-width="2.0" stroke-linecap="round" stroke-linejoin="round" opacity="1"/><path d="M445.5 71.0 C446.3 71.3 447.7 69.0 450.5 73.0 C453.3 77.0 458.7 86.8 462.3 95.0 C465.9 103.2 469.3 114.1 472.4 121.9 C475.5 129.7 478.6 134.7 480.8 142.0 C483.1 149.3 485.3 157.7 485.9 165.6 C486.5 173.5 485.3 181.3 484.2 189.2 C483.1 197.1 481.2 205.5 479.0 212.8 C476.8 220.1 474.3 226.8 470.7 233.0 C467.1 239.2 461.7 245.9 457.2 249.8 C452.7 253.7 446.0 255.5 443.8 256.6" fill="none" stroke="#2a2a2a" stroke-width="1.4" stroke-linecap="round" stroke-linejoin="round" opacity="1"/><ellipse cx="317" cy="86" rx="27" ry="13.5" transform="rotate(-18 317 86)" fill="none" stroke="#1e1e1e" stroke-width="1.7"/><path d="M308.0 89.0 C308.5 87.8 310.0 84.2 311.0 82.0 C312.0 79.8 313.5 77.0 314.0 76.0" fill="none" stroke="#111" stroke-width="2.6" stroke-linecap="round" stroke-linejoin="round" opacity="1"/><path d="M310.0 71.0 C310.7 71.8 312.0 75.4 314.0 76.0 C316.0 76.6 319.0 74.5 322.0 74.5 C325.0 74.5 330.3 75.8 332.0 76.0" fill="none" stroke="#111" stroke-width="2.6" stroke-linecap="round" stroke-linejoin="round" opacity="1"/><ellipse cx="275" cy="84.5" rx="4.2" ry="4.6" transform="rotate(25 275 84.5)" fill="#111"/><ellipse cx="274.5" cy="98.5" rx="4.5" ry="3.8" fill="#c4c4c4"/><path d="M321.1 179.8 C322.0 177.8 324.2 170.9 326.4 167.5 C328.6 164.1 331.4 161.5 334.3 159.6 C337.2 157.7 340.6 156.6 344.0 156.0 C347.4 155.4 351.6 155.4 354.5 156.0 C357.4 156.6 359.0 157.7 361.5 159.6 C364.0 161.5 366.9 164.7 369.4 167.5 C371.9 170.3 374.6 174.0 376.4 176.3 C378.2 178.7 379.4 180.7 380.0 181.6" fill="none" stroke="#1a1a1a" stroke-width="1.6" stroke-linecap="round" stroke-linejoin="round" opacity="1"/><path d="M321.1 179.8 C321.6 181.0 322.3 184.6 323.8 186.8 C325.3 189.0 327.6 191.7 329.9 193.0 C332.2 194.3 335.2 194.7 337.8 194.7 C340.4 194.7 343.2 194.0 345.7 193.0 C348.2 192.0 350.4 189.9 352.7 188.6 C355.0 187.3 356.9 185.9 359.7 185.0 C362.5 184.1 366.6 183.6 369.4 183.3 C372.2 183.0 375.2 183.3 376.4 183.3" fill="none" stroke="#2a2a2a" stroke-width="1.4" stroke-linecap="round" stroke-linejoin="round" opacity="1"/><path d="M337.0 161.4 C338.4 161.6 343.1 161.4 345.7 162.3 C348.3 163.2 350.6 164.8 352.7 166.7 C354.8 168.6 356.8 170.6 358.0 173.7 C359.2 176.8 359.4 183.1 359.7 185.0" fill="none" stroke="#111" stroke-width="2.0" stroke-linecap="round" stroke-linejoin="round" opacity="1"/><path d="M411.0 149.0 C412.4 148.7 416.6 146.4 419.4 146.9 C422.2 147.4 425.5 149.4 427.8 151.8 C430.1 154.2 432.2 158.3 433.4 161.6 C434.6 164.9 434.6 169.8 434.8 171.5" fill="none" stroke="#111" stroke-width="2.0" stroke-linecap="round" stroke-linejoin="round" opacity="1"/><path d="M412.4 143.4 C415.2 143.6 424.5 142.9 429.2 144.8 C433.9 146.7 438.3 151.6 440.4 154.6 C442.5 157.6 442.3 160.2 441.8 163.0 C441.3 165.8 438.3 170.1 437.6 171.5" fill="none" stroke="#777" stroke-width="1.0" stroke-linecap="round" stroke-linejoin="round" opacity="1"/><path d="M411.0 149.0 C410.6 150.6 409.1 155.1 408.9 158.8 C408.7 162.6 409.2 168.5 409.6 171.5 C410.0 174.5 410.8 176.1 411.0 177.0" fill="none" stroke="#2a2a2a" stroke-width="1.3" stroke-linecap="round" stroke-linejoin="round" opacity="1"/><path d="M411.0 175.7 C412.9 175.2 418.2 173.5 422.2 172.9 C426.2 172.3 432.7 172.3 434.8 172.2" fill="none" stroke="#2a2a2a" stroke-width="1.3" stroke-linecap="round" stroke-linejoin="round" opacity="1"/><ellipse cx="422" cy="162" rx="9" ry="9" fill="#e8e8e8" opacity="0.6"/><path d="M310.0 165.9 C311.9 162.8 316.5 151.7 321.2 147.6 C325.9 143.5 335.2 142.4 338.0 141.3" fill="none" stroke="#555" stroke-width="1.1" stroke-linecap="round" stroke-linejoin="round" opacity="1"/><path d="M410.0 131.0 C412.5 130.3 421.2 127.7 425.0 127.0 C428.8 126.3 431.7 127.0 433.0 127.0" fill="none" stroke="#888" stroke-width="1.0" stroke-linecap="round" stroke-linejoin="round" opacity="1"/><path d="M356 112 l3 6" stroke="#666" stroke-width="0.8"/><path d="M359 111 l3 6" stroke="#666" stroke-width="0.8"/><path d="M376 114 l3 6" stroke="#666" stroke-width="0.8"/><path d="M380 115 l3 6" stroke="#666" stroke-width="0.8"/><path d="M384 116 l3 6" stroke="#666" stroke-width="0.8"/><path d="M376 139 l3 6" stroke="#666" stroke-width="0.8"/><path d="M380 139 l3 6" stroke="#666" stroke-width="0.8"/><path d="M384.3 184.1 C385.1 182.8 387.4 180.4 390.0 179.2 C392.6 178.0 396.5 177.1 399.8 177.0 C403.1 176.9 407.9 177.1 409.6 178.5 C411.4 179.9 410.8 183.4 410.3 185.5 C409.8 187.6 408.3 189.7 406.8 191.0 C405.3 192.3 403.1 193.3 401.2 193.2 C399.3 193.1 397.5 191.0 395.6 190.4 C393.7 189.8 391.8 190.3 390.0 189.7 C388.2 189.1 385.9 187.8 385.0 186.9 C384.1 186.0 383.5 185.4 384.3 184.1Z" fill="none" stroke="#1e1e1e" stroke-width="1.4" stroke-linecap="round" stroke-linejoin="round" opacity="1"/><path d="M401.6 195.4 C401.9 196.8 403.1 202.2 403.4 203.5" fill="none" stroke="#111" stroke-width="1.6" stroke-linecap="round" stroke-linejoin="round" opacity="1"/><path d="M391.7 217.0 C392.6 215.7 395.1 211.2 397.0 209.0 C398.9 206.8 401.2 203.8 403.4 203.5 C405.6 203.2 407.6 205.3 410.0 207.0 C412.4 208.7 416.5 212.3 417.8 213.4" fill="none" stroke="#111" stroke-width="1.6" stroke-linecap="round" stroke-linejoin="round" opacity="1"/><path d="M388.0 237.7 C388.3 238.8 388.5 243.3 390.0 244.0 C391.5 244.7 394.9 242.6 397.0 242.0 C399.1 241.4 401.0 239.8 402.5 240.4 C404.0 241.0 404.5 245.5 406.0 245.8 C407.5 246.1 409.7 243.2 411.5 242.0 C413.3 240.8 415.8 238.8 417.0 238.5 C418.2 238.2 417.5 241.4 418.7 240.4 C419.9 239.4 423.1 233.7 424.0 232.3" fill="none" stroke="#555" stroke-width="1.0" stroke-linecap="round" stroke-linejoin="round" opacity="1"/><path d="M328.8 203.5 C327.3 205.4 321.3 213.1 319.8 215.0" fill="none" stroke="#666" stroke-width="1.0" stroke-linecap="round" stroke-linejoin="round" opacity="1"/><path d="M321.6 218.8 C321.9 220.6 323.1 227.8 323.4 229.6" fill="none" stroke="#666" stroke-width="1.0" stroke-linecap="round" stroke-linejoin="round" opacity="1"/><path d="M327.0 233.0 C327.6 234.5 330.0 240.5 330.6 242.0" fill="none" stroke="#666" stroke-width="1.0" stroke-linecap="round" stroke-linejoin="round" opacity="1"/><path d="M332.4 240.0 C333.0 241.2 335.4 246.2 336.0 247.5" fill="none" stroke="#666" stroke-width="1.0" stroke-linecap="round" stroke-linejoin="round" opacity="1"/><path d="M337.8 244.0 C338.4 244.8 340.8 248.2 341.4 249.0" fill="none" stroke="#666" stroke-width="1.0" stroke-linecap="round" stroke-linejoin="round" opacity="1"/><path d="M460.0 211.6 C460.3 212.8 461.6 217.6 461.9 218.8" fill="none" stroke="#444" stroke-width="1.0" stroke-linecap="round" stroke-linejoin="round" opacity="1"/><path d="M458.0 190.0 C458.3 190.9 459.7 194.5 460.0 195.4" fill="none" stroke="#444" stroke-width="1.0" stroke-linecap="round" stroke-linejoin="round" opacity="1"/><path d="M261.7 275.8 C262.8 274.6 265.2 270.6 268.4 268.4 C271.6 266.1 276.6 263.6 280.7 262.3 C284.8 261.0 288.9 260.5 293.0 260.4 C297.1 260.3 301.4 260.6 305.3 261.7 C309.2 262.8 313.2 265.0 316.3 267.2 C319.4 269.4 321.8 272.3 323.7 274.6 C325.6 276.9 326.7 278.8 328.0 281.0 C329.3 283.2 330.8 285.6 331.5 288.0 C332.2 290.4 332.6 293.0 332.3 295.5 C332.0 298.0 331.3 301.0 329.9 302.8 C328.5 304.6 326.0 305.5 323.7 306.5 C321.4 307.5 318.4 308.2 316.0 309.0 C313.6 309.8 312.2 310.8 309.0 311.4 C305.8 312.0 300.6 312.7 296.7 312.7 C292.8 312.7 288.9 312.4 285.6 311.4 C282.3 310.4 279.1 308.9 277.0 306.5 C274.9 304.1 273.9 300.0 273.3 296.7 C272.7 293.4 272.4 290.0 273.3 286.9 C274.2 283.8 278.0 279.7 278.9 278.3" fill="none" stroke="#2a2a2a" stroke-width="1.4" stroke-linecap="round" stroke-linejoin="round" opacity="1"/><path d="M285.6 286.9 C285.5 288.9 284.6 295.3 285.0 299.0 C285.4 302.7 287.5 307.3 288.0 309.0" fill="none" stroke="#333" stroke-width="1.2" stroke-linecap="round" stroke-linejoin="round" opacity="1"/><path d="M297.9 286.9 C297.8 288.9 296.7 295.3 297.3 299.0 C297.9 302.7 300.9 307.3 301.6 309.0" fill="none" stroke="#333" stroke-width="1.2" stroke-linecap="round" stroke-linejoin="round" opacity="1"/><path d="M311.4 284.4 C312.4 285.8 316.2 289.5 317.6 293.0 C319.0 296.5 319.6 303.2 320.0 305.3" fill="none" stroke="#333" stroke-width="1.2" stroke-linecap="round" stroke-linejoin="round" opacity="1"/><path d="M261.7 275.8 C261.2 276.8 259.3 279.8 258.6 282.0 C257.9 284.2 257.6 288.1 257.4 289.3" fill="none" stroke="#888" stroke-width="1.0" stroke-linecap="round" stroke-linejoin="round" opacity="1"/><path d="M194.7 301.8 C212.2 297.9 265.8 285.8 300.0 278.5 C334.2 271.2 370.0 264.4 400.0 258.0 C430.0 251.6 456.4 244.7 480.0 240.0 C503.6 235.3 531.2 231.4 541.4 229.7" fill="none" stroke="#3a3a3a" stroke-width="1.2" stroke-linecap="round" stroke-linejoin="round" opacity="1"/><path d="M194.7 301.8 C212.2 298.8 265.8 289.8 300.0 283.5 C334.2 277.2 370.0 270.1 400.0 264.0 C430.0 257.9 456.4 252.6 480.0 246.9 C503.6 241.2 531.2 232.6 541.4 229.7" fill="none" stroke="#555" stroke-width="1.1" stroke-linecap="round" stroke-linejoin="round" opacity="1"/><path d="M194.7 301.8 C195.1 306.0 195.5 317.4 197.2 326.9 C198.8 336.4 200.9 347.8 204.6 358.8 C208.3 369.9 213.4 382.8 219.3 393.2 C225.2 403.6 232.6 411.4 240.0 421.0 C247.4 430.6 256.5 442.0 264.0 451.0 C271.5 460.0 279.2 468.7 285.0 475.0 C290.8 481.3 296.3 486.3 298.6 488.6" fill="none" stroke="#333" stroke-width="1.2" stroke-linecap="round" stroke-linejoin="round" opacity="1"/><path d="M298.6 488.6 C308.8 487.6 339.8 485.4 360.0 482.6 C380.2 479.8 400.0 476.0 420.0 472.0 C440.0 468.0 463.2 463.6 480.0 458.6 C496.8 453.6 514.0 444.8 520.8 442.0" fill="none" stroke="#333" stroke-width="1.2" stroke-linecap="round" stroke-linejoin="round" opacity="1"/><path d="M300 489 L304.6 503.6 M520.8 442 L520.8 460" stroke="#555" stroke-width="1" fill="none"/><path d="M304.6 503.6 C313.8 502.8 340.8 501.8 360.0 499.0 C379.2 496.2 400.0 491.5 420.0 487.0 C440.0 482.5 463.2 476.7 480.0 472.0 C496.8 467.3 514.0 461.2 520.8 459.0" fill="none" stroke="#3a3a3a" stroke-width="1.3" stroke-linecap="round" stroke-linejoin="round" opacity="1"/><path d="M541.4 229.7 C542.8 235.0 548.0 250.6 550.0 261.6 C552.0 272.7 553.3 286.2 553.7 296.0 C554.1 305.8 553.1 313.3 552.5 320.6 C551.9 327.9 551.0 332.3 550.0 340.0 C549.0 347.7 548.1 357.1 546.3 366.9 C544.5 376.7 541.9 389.4 539.0 398.8 C536.1 408.2 532.0 416.2 529.0 423.4 C526.0 430.6 522.2 438.9 520.8 442.0" fill="none" stroke="#333" stroke-width="1.2" stroke-linecap="round" stroke-linejoin="round" opacity="1"/><path d="M550.5 262.0 C551.6 261.7 554.4 261.5 557.0 260.0 C559.6 258.5 562.5 256.2 566.0 253.0 C569.5 249.8 573.2 244.5 578.0 241.0 C582.8 237.5 588.8 233.8 595.0 232.0 C601.2 230.2 608.7 228.7 615.0 230.0 C621.3 231.3 628.0 235.3 633.0 240.0 C638.0 244.7 642.1 250.5 645.0 258.0 C647.9 265.5 650.0 275.5 650.5 285.0 C651.0 294.5 649.8 306.5 648.0 315.0 C646.2 323.5 643.3 329.5 640.0 336.0 C636.7 342.5 632.5 348.0 628.0 354.0 C623.5 360.0 619.8 366.8 612.7 371.8 C605.6 376.8 594.2 380.3 585.6 384.0 C577.0 387.7 568.4 389.8 561.0 393.9 C553.6 398.0 546.3 404.5 541.4 408.6 C536.5 412.7 533.2 416.9 531.6 418.5" fill="none" stroke="#2e2e2e" stroke-width="1.5" stroke-linecap="round" stroke-linejoin="round" opacity="1"/><path d="M553.7 296.0 C554.5 293.9 556.6 286.8 558.6 283.7 C560.6 280.6 564.8 278.6 566.0 277.6" fill="none" stroke="#444" stroke-width="1.0" stroke-linecap="round" stroke-linejoin="round" opacity="1"/><circle cx="566" cy="278" r="1" fill="#222"/></g></svg>
<div class="a" style="left:154px;top:57px;width:9px;height:9px;border-radius:50%;background:conic-gradient(#e040a0,#4060e0,#40e0e0,#e0e0e0,#e040a0)"></div>
<div class="t" style="left:483px;top:58.5px;font-size:5.5px;color:#cfcfcf;">[Not Saved]</div>
<div class="t" style="left:518px;top:58px;font-size:7px;color:#cfcfcf;">*</div>
<div class="a" style="left:840px;top:57px;width:9px;height:9px;background:#222;border:1px solid #777"></div>
<div class="a" style="left:842.5px;top:59.5px;width:4px;height:4px;background:#ddd;"></div>
<svg class="a" style="left:851px;top:75px;" width="4" height="3" viewBox="0 0 4 3"><path d="M0 3 L2 0 L4 3z" fill="#ccc"/></svg>
<svg class="a" style="left:851px;top:533px;" width="4" height="3" viewBox="0 0 4 3"><path d="M0 0 L2 3 L4 0z" fill="#ccc"/></svg>
<div class="a" style="left:856px;top:55px;width:144px;height:490px;background:#414141;"></div>
<div class="a" style="left:856px;top:55px;width:4px;height:490px;background:#323232;"></div>
<div class="t" style="left:861px;top:57.5px;font-size:5.5px;color:#d0d0d0;">Overview</div>
<svg class="a" style="left:992px;top:57px;" width="8" height="7" viewBox="0 0 8 7"><path d="M0.5 0.5h5v6h-5z" fill="none" stroke="#777"/></svg>
<div class="a" style="left:860px;top:63.5px;width:140px;height:46px;background:#2e2e2e;"></div>
<div class="a" style="left:893.5px;top:64px;width:79.5px;height:46px;background:#ffffff;"></div>
<svg class="a" style="left:893.5px;top:64px;overflow:hidden" width="79.5" height="46" viewBox="0 0 79.5 46"><g transform="translate(26.2 5.5) rotate(11.6) scale(0.074) translate(-147 -70)"><path d="M216.0 175.0 C218.5 170.5 222.3 154.5 231.0 148.0 C239.7 141.5 256.5 137.8 268.0 136.0 C279.5 134.2 294.7 136.8 300.0 137.0" fill="none" stroke="#a8a8a8" stroke-width="8" stroke-linecap="round" stroke-linejoin="round" opacity="1"/><path d="M206.0 205.0 C207.3 209.2 210.0 220.5 214.0 230.0 C218.0 239.5 226.3 252.0 230.0 262.0 C233.7 272.0 235.0 285.3 236.0 290.0" fill="none" stroke="#a8a8a8" stroke-width="8" stroke-linecap="round" stroke-linejoin="round" opacity="1"/><path d="M455.0 78.0 C457.2 76.8 465.8 72.2 468.0 71.0" fill="none" stroke="#a8a8a8" stroke-width="8" stroke-linecap="round" stroke-linejoin="round" opacity="1"/><path d="M478.0 73.0 C478.8 76.7 482.2 86.3 483.0 95.0 C483.8 103.7 483.0 120.0 483.0 125.0" fill="none" stroke="#a8a8a8" stroke-width="8" stroke-linecap="round" stroke-linejoin="round" opacity="1"/><path d="M322.0 205.0 C323.0 209.2 325.2 222.3 328.0 230.0 C330.8 237.7 337.2 247.5 339.0 251.0" fill="none" stroke="#a8a8a8" stroke-width="8" stroke-linecap="round" stroke-linejoin="round" opacity="1"/><path d="M329.0 210.0 C329.7 214.2 330.3 227.5 333.0 235.0 C335.7 242.5 343.0 251.7 345.0 255.0" fill="none" stroke="#a8a8a8" stroke-width="8" stroke-linecap="round" stroke-linejoin="round" opacity="1"/><path d="M572.0 275.0 C574.3 273.0 580.5 266.0 586.0 263.0 C591.5 260.0 599.3 257.2 605.0 257.0 C610.7 256.8 616.3 257.8 620.0 262.0 C623.7 266.2 625.8 274.0 627.0 282.0 C628.2 290.0 628.2 301.0 627.0 310.0 C625.8 319.0 623.3 328.3 620.0 336.0 C616.7 343.7 612.3 351.0 607.0 356.0 C601.7 361.0 594.8 363.8 588.0 366.0 C581.2 368.2 571.7 368.8 566.0 369.0 C560.3 369.2 556.0 367.3 554.0 367.0" fill="none" stroke="#a8a8a8" stroke-width="8" stroke-linecap="round" stroke-linejoin="round" opacity="1"/><path d="M615.0 350.0 C610.0 354.7 595.8 371.3 585.0 378.0 C574.2 384.7 557.8 386.3 550.0 390.0 C542.2 393.7 540.0 398.3 538.0 400.0" fill="none" stroke="#a8a8a8" stroke-width="8" stroke-linecap="round" stroke-linejoin="round" opacity="1"/><path d="M300.0 496.0 C310.0 495.3 340.0 494.5 360.0 492.0 C380.0 489.5 400.0 485.3 420.0 481.0 C440.0 476.7 463.5 470.8 480.0 466.0 C496.5 461.2 512.5 454.3 519.0 452.0" fill="none" stroke="#a8a8a8" stroke-width="8" stroke-linecap="round" stroke-linejoin="round" opacity="1"/><path d="M310.0 210.0 C311.7 215.0 314.2 231.3 320.0 240.0 C325.8 248.7 335.0 257.3 345.0 262.0 C355.0 266.7 367.5 268.0 380.0 268.0 C392.5 268.0 407.5 265.0 420.0 262.0 C432.5 259.0 449.2 252.0 455.0 250.0" fill="none" stroke="#a8a8a8" stroke-width="8" stroke-linecap="round" stroke-linejoin="round" opacity="1"/><path d="M230.0 150.0 C233.3 147.5 240.0 138.7 250.0 135.0 C260.0 131.3 283.3 129.2 290.0 128.0" fill="none" stroke="#a8a8a8" stroke-width="8" stroke-linecap="round" stroke-linejoin="round" opacity="1"/><path d="M213.0 180.0 C214.5 176.7 216.7 165.0 222.0 160.0 C227.3 155.0 241.2 151.7 245.0 150.0" fill="none" stroke="#a8a8a8" stroke-width="8" stroke-linecap="round" stroke-linejoin="round" opacity="1"/><path d="M482.0 218.0 C483.7 220.8 490.0 227.7 492.0 235.0 C494.0 242.3 493.7 257.5 494.0 262.0" fill="none" stroke="#a8a8a8" stroke-width="8" stroke-linecap="round" stroke-linejoin="round" opacity="1"/><path d="M478.0 232.0 C479.3 234.7 484.7 245.3 486.0 248.0" fill="none" stroke="#a8a8a8" stroke-width="8" stroke-linecap="round" stroke-linejoin="round" opacity="1"/><path d="M425.0 88.0 C430.0 86.7 447.5 79.7 455.0 80.0 C462.5 80.3 467.5 88.3 470.0 90.0" fill="none" stroke="#a8a8a8" stroke-width="8" stroke-linecap="round" stroke-linejoin="round" opacity="1"/><path d="M386.0 118.0 C388.3 117.2 394.3 113.0 400.0 113.0 C405.7 113.0 416.7 117.2 420.0 118.0" fill="none" stroke="#a8a8a8" stroke-width="8" stroke-linecap="round" stroke-linejoin="round" opacity="1"/><path d="M216.0 180.0 C217.8 183.2 223.1 194.1 226.6 199.0 C230.1 203.9 235.3 207.8 237.1 209.5" fill="none" stroke="#a8a8a8" stroke-width="8" stroke-linecap="round" stroke-linejoin="round" opacity="1"/><path d="M235.5 268.0 C235.8 271.5 236.8 285.5 237.0 289.0" fill="none" stroke="#a8a8a8" stroke-width="8" stroke-linecap="round" stroke-linejoin="round" opacity="1"/><path d="M240.0 270.0 C240.2 273.3 240.8 286.7 241.0 290.0" fill="none" stroke="#a8a8a8" stroke-width="8" stroke-linecap="round" stroke-linejoin="round" opacity="1"/><path d="M213.0 135.0 C212.2 141.3 208.2 158.3 208.0 173.0 C207.8 187.7 208.7 209.0 212.0 223.0 C215.3 237.0 225.3 251.3 228.0 257.0" fill="none" stroke="#a8a8a8" stroke-width="8" stroke-linecap="round" stroke-linejoin="round" opacity="1"/><path d="M339.0 201.0 C337.2 204.7 329.2 214.7 328.0 223.0 C326.8 231.3 329.0 244.0 332.0 251.0 C335.0 258.0 343.7 262.7 346.0 265.0" fill="none" stroke="#a8a8a8" stroke-width="8" stroke-linecap="round" stroke-linejoin="round" opacity="1"/><path d="M331.0 202.0 C329.3 206.7 321.5 221.3 321.0 230.0 C320.5 238.7 324.5 247.7 328.0 254.0 C331.5 260.3 339.7 265.7 342.0 268.0" fill="none" stroke="#a8a8a8" stroke-width="8" stroke-linecap="round" stroke-linejoin="round" opacity="1"/><path d="M314.0 230.0 C314.5 233.5 314.7 245.2 317.0 251.0 C319.3 256.8 326.2 262.7 328.0 265.0" fill="none" stroke="#a8a8a8" stroke-width="8" stroke-linecap="round" stroke-linejoin="round" opacity="1"/><path d="M452.0 196.0 C453.7 199.2 459.8 207.7 462.0 215.0 C464.2 222.3 465.7 232.8 465.0 240.0 C464.3 247.2 459.2 255.0 458.0 258.0" fill="none" stroke="#a8a8a8" stroke-width="8" stroke-linecap="round" stroke-linejoin="round" opacity="1"/><path d="M446.0 200.0 C447.5 204.2 454.0 216.7 455.0 225.0 C456.0 233.3 452.5 245.8 452.0 250.0" fill="none" stroke="#a8a8a8" stroke-width="8" stroke-linecap="round" stroke-linejoin="round" opacity="1"/><path d="M370.0 262.0 C375.0 263.0 390.0 268.0 400.0 268.0 C410.0 268.0 425.0 263.0 430.0 262.0" fill="none" stroke="#a8a8a8" stroke-width="8" stroke-linecap="round" stroke-linejoin="round" opacity="1"/><path d="M234.8 104.0 C230.9 101.3 219.0 89.8 211.4 88.0 C203.8 86.2 195.6 88.8 189.0 93.0 C182.4 97.2 176.1 106.2 172.0 113.0 C167.9 119.8 165.3 126.6 164.7 133.7 C164.1 140.8 165.5 149.2 168.4 155.8 C171.3 162.4 176.3 169.1 182.0 173.0 C187.7 176.9 199.3 178.0 202.8 179.0" fill="none" stroke="#a8a8a8" stroke-width="8" stroke-linecap="round" stroke-linejoin="round" opacity="1"/><path d="M168.4 114.0 C171.5 113.2 180.6 108.6 186.9 109.0 C193.2 109.4 202.0 112.8 206.5 116.5 C211.0 120.2 212.7 128.6 213.9 131.0" fill="none" stroke="#a8a8a8" stroke-width="8" stroke-linecap="round" stroke-linejoin="round" opacity="1"/><path d="M272.0 70.0 C269.7 71.6 264.2 73.9 258.0 79.6 C251.8 85.3 242.2 95.8 234.8 104.0 C227.5 112.2 218.4 119.8 213.9 128.8 C209.4 137.8 209.5 146.5 207.7 158.0 C205.8 169.5 202.6 189.0 202.8 197.6 C203.0 206.2 205.9 202.8 209.0 209.7 C212.1 216.6 217.2 230.4 221.3 239.0 C225.4 247.6 229.6 255.2 233.5 261.0 C237.4 266.8 242.3 268.9 244.6 273.5 C246.8 278.1 246.6 285.8 247.0 288.3" fill="none" stroke="#a8a8a8" stroke-width="8" stroke-linecap="round" stroke-linejoin="round" opacity="1"/><path d="M261.8 276.0 C260.8 274.3 258.3 270.5 255.6 266.0 C252.9 261.5 248.1 255.5 245.8 249.0 C243.5 242.5 242.4 235.1 242.0 226.9 C241.6 218.7 241.1 211.5 243.4 200.0 C245.7 188.5 249.5 170.7 255.6 158.0 C261.7 145.3 271.4 132.6 280.0 124.0 C288.6 115.5 295.9 112.4 307.0 106.7 C318.1 101.0 335.5 93.9 346.6 90.0 C357.7 86.1 364.8 83.7 373.7 83.4 C382.6 83.1 392.8 86.3 400.0 88.2 C407.2 90.1 411.2 92.8 416.8 95.0 C422.4 97.2 428.1 97.8 433.7 101.7 C439.3 105.6 445.4 112.3 450.5 118.5 C455.6 124.7 460.1 132.5 464.0 138.7 C467.9 144.9 471.2 150.4 474.0 155.5 C476.8 160.6 479.5 164.1 480.8 169.0 C482.1 173.9 481.8 182.3 482.0 185.0" fill="none" stroke="#a8a8a8" stroke-width="8" stroke-linecap="round" stroke-linejoin="round" opacity="1"/><path d="M264.0 271.0 C263.4 269.0 262.0 264.1 260.6 258.8 C259.2 253.5 256.4 246.4 255.6 239.0 C254.8 231.6 255.0 221.1 255.6 214.6 C256.2 208.1 256.4 208.6 259.3 200.0 C262.2 191.4 267.0 173.5 272.8 163.0 C278.6 152.5 285.6 144.0 294.0 137.0 C302.4 130.0 313.8 125.4 323.0 121.0 C332.2 116.6 341.8 114.1 349.0 110.5 C356.2 106.9 360.7 101.7 366.0 99.4 C371.3 97.2 375.3 95.8 381.0 97.0 C386.7 98.2 393.5 104.5 400.0 106.7 C406.5 108.9 413.5 107.5 420.2 110.0 C426.9 112.5 434.2 116.6 440.4 121.9 C446.6 127.2 453.3 136.4 457.2 142.0 C461.1 147.6 462.3 151.0 464.0 155.5 C465.7 160.0 465.9 165.6 467.3 169.0 C468.7 172.4 471.0 172.6 472.4 176.0 C473.8 179.4 475.2 183.6 475.8 189.2 C476.4 194.8 477.2 202.7 475.8 209.4 C474.4 216.1 471.0 223.4 467.3 229.6 C463.6 235.8 458.4 242.3 453.9 246.5 C449.4 250.7 442.6 253.5 440.4 254.9" fill="none" stroke="#a8a8a8" stroke-width="8" stroke-linecap="round" stroke-linejoin="round" opacity="1"/><path d="M445.5 71.0 C446.3 71.3 447.7 69.0 450.5 73.0 C453.3 77.0 458.7 86.8 462.3 95.0 C465.9 103.2 469.3 114.1 472.4 121.9 C475.5 129.7 478.6 134.7 480.8 142.0 C483.1 149.3 485.3 157.7 485.9 165.6 C486.5 173.5 485.3 181.3 484.2 189.2 C483.1 197.1 481.2 205.5 479.0 212.8 C476.8 220.1 474.3 226.8 470.7 233.0 C467.1 239.2 461.7 245.9 457.2 249.8 C452.7 253.7 446.0 255.5 443.8 256.6" fill="none" stroke="#a8a8a8" stroke-width="8" stroke-linecap="round" stroke-linejoin="round" opacity="1"/><ellipse cx="317" cy="86" rx="27" ry="13.5" transform="rotate(-18 317 86)" fill="none" stroke="#a8a8a8" stroke-width="8"/><path d="M308.0 89.0 C308.5 87.8 310.0 84.2 311.0 82.0 C312.0 79.8 313.5 77.0 314.0 76.0" fill="none" stroke="#a8a8a8" stroke-width="8" stroke-linecap="round" stroke-linejoin="round" opacity="1"/><path d="M310.0 71.0 C310.7 71.8 312.0 75.4 314.0 76.0 C316.0 76.6 319.0 74.5 322.0 74.5 C325.0 74.5 330.3 75.8 332.0 76.0" fill="none" stroke="#a8a8a8" stroke-width="8" stroke-linecap="round" stroke-linejoin="round" opacity="1"/><ellipse cx="275" cy="84.5" rx="4.2" ry="4.6" transform="rotate(25 275 84.5)" fill="#111"/><ellipse cx="274.5" cy="98.5" rx="4.5" ry="3.8" fill="#c4c4c4"/><path d="M321.1 179.8 C322.0 177.8 324.2 170.9 326.4 167.5 C328.6 164.1 331.4 161.5 334.3 159.6 C337.2 157.7 340.6 156.6 344.0 156.0 C347.4 155.4 351.6 155.4 354.5 156.0 C357.4 156.6 359.0 157.7 361.5 159.6 C364.0 161.5 366.9 164.7 369.4 167.5 C371.9 170.3 374.6 174.0 376.4 176.3 C378.2 178.7 379.4 180.7 380.0 181.6" fill="none" stroke="#a8a8a8" stroke-width="8" stroke-linecap="round" stroke-linejoin="round" opacity="1"/><path d="M321.1 179.8 C321.6 181.0 322.3 184.6 323.8 186.8 C325.3 189.0 327.6 191.7 329.9 193.0 C332.2 194.3 335.2 194.7 337.8 194.7 C340.4 194.7 343.2 194.0 345.7 193.0 C348.2 192.0 350.4 189.9 352.7 188.6 C355.0 187.3 356.9 185.9 359.7 185.0 C362.5 184.1 366.6 183.6 369.4 183.3 C372.2 183.0 375.2 183.3 376.4 183.3" fill="none" stroke="#a8a8a8" stroke-width="8" stroke-linecap="round" stroke-linejoin="round" opacity="1"/><path d="M337.0 161.4 C338.4 161.6 343.1 161.4 345.7 162.3 C348.3 163.2 350.6 164.8 352.7 166.7 C354.8 168.6 356.8 170.6 358.0 173.7 C359.2 176.8 359.4 183.1 359.7 185.0" fill="none" stroke="#a8a8a8" stroke-width="8" stroke-linecap="round" stroke-linejoin="round" opacity="1"/><path d="M411.0 149.0 C412.4 148.7 416.6 146.4 419.4 146.9 C422.2 147.4 425.5 149.4 427.8 151.8 C430.1 154.2 432.2 158.3 433.4 161.6 C434.6 164.9 434.6 169.8 434.8 171.5" fill="none" stroke="#a8a8a8" stroke-width="8" stroke-linecap="round" stroke-linejoin="round" opacity="1"/><path d="M412.4 143.4 C415.2 143.6 424.5 142.9 429.2 144.8 C433.9 146.7 438.3 151.6 440.4 154.6 C442.5 157.6 442.3 160.2 441.8 163.0 C441.3 165.8 438.3 170.1 437.6 171.5" fill="none" stroke="#a8a8a8" stroke-width="8" stroke-linecap="round" stroke-linejoin="round" opacity="1"/><path d="M411.0 149.0 C410.6 150.6 409.1 155.1 408.9 158.8 C408.7 162.6 409.2 168.5 409.6 171.5 C410.0 174.5 410.8 176.1 411.0 177.0" fill="none" stroke="#a8a8a8" stroke-width="8" stroke-linecap="round" stroke-linejoin="round" opacity="1"/><path d="M411.0 175.7 C412.9 175.2 418.2 173.5 422.2 172.9 C426.2 172.3 432.7 172.3 434.8 172.2" fill="none" stroke="#a8a8a8" stroke-width="8" stroke-linecap="round" stroke-linejoin="round" opacity="1"/><ellipse cx="422" cy="162" rx="9" ry="9" fill="#e8e8e8" opacity="0.6"/><path d="M310.0 165.9 C311.9 162.8 316.5 151.7 321.2 147.6 C325.9 143.5 335.2 142.4 338.0 141.3" fill="none" stroke="#a8a8a8" stroke-width="8" stroke-linecap="round" stroke-linejoin="round" opacity="1"/><path d="M410.0 131.0 C412.5 130.3 421.2 127.7 425.0 127.0 C428.8 126.3 431.7 127.0 433.0 127.0" fill="none" stroke="#a8a8a8" stroke-width="8" stroke-linecap="round" stroke-linejoin="round" opacity="1"/><path d="M356 112 l3 6" stroke="#a8a8a8" stroke-width="8"/><path d="M359 111 l3 6" stroke="#a8a8a8" stroke-width="8"/><path d="M376 114 l3 6" stroke="#a8a8a8" stroke-width="8"/><path d="M380 115 l3 6" stroke="#a8a8a8" stroke-width="8"/><path d="M384 116 l3 6" stroke="#a8a8a8" stroke-width="8"/><path d="M376 139 l3 6" stroke="#a8a8a8" stroke-width="8"/><path d="M380 139 l3 6" stroke="#a8a8a8" stroke-width="8"/><path d="M384.3 184.1 C385.1 182.8 387.4 180.4 390.0 179.2 C392.6 178.0 396.5 177.1 399.8 177.0 C403.1 176.9 407.9 177.1 409.6 178.5 C411.4 179.9 410.8 183.4 410.3 185.5 C409.8 187.6 408.3 189.7 406.8 191.0 C405.3 192.3 403.1 193.3 401.2 193.2 C399.3 193.1 397.5 191.0 395.6 190.4 C393.7 189.8 391.8 190.3 390.0 189.7 C388.2 189.1 385.9 187.8 385.0 186.9 C384.1 186.0 383.5 185.4 384.3 184.1Z" fill="none" stroke="#a8a8a8" stroke-width="8" stroke-linecap="round" stroke-linejoin="round" opacity="1"/><path d="M401.6 195.4 C401.9 196.8 403.1 202.2 403.4 203.5" fill="none" stroke="#a8a8a8" stroke-width="8" stroke-linecap="round" stroke-linejoin="round" opacity="1"/><path d="M391.7 217.0 C392.6 215.7 395.1 211.2 397.0 209.0 C398.9 206.8 401.2 203.8 403.4 203.5 C405.6 203.2 407.6 205.3 410.0 207.0 C412.4 208.7 416.5 212.3 417.8 213.4" fill="none" stroke="#a8a8a8" stroke-width="8" stroke-linecap="round" stroke-linejoin="round" opacity="1"/><path d="M388.0 237.7 C388.3 238.8 388.5 243.3 390.0 244.0 C391.5 244.7 394.9 242.6 397.0 242.0 C399.1 241.4 401.0 239.8 402.5 240.4 C404.0 241.0 404.5 245.5 406.0 245.8 C407.5 246.1 409.7 243.2 411.5 242.0 C413.3 240.8 415.8 238.8 417.0 238.5 C418.2 238.2 417.5 241.4 418.7 240.4 C419.9 239.4 423.1 233.7 424.0 232.3" fill="none" stroke="#a8a8a8" stroke-width="8" stroke-linecap="round" stroke-linejoin="round" opacity="1"/><path d="M328.8 203.5 C327.3 205.4 321.3 213.1 319.8 215.0" fill="none" stroke="#a8a8a8" stroke-width="8" stroke-linecap="round" stroke-linejoin="round" opacity="1"/><path d="M321.6 218.8 C321.9 220.6 323.1 227.8 323.4 229.6" fill="none" stroke="#a8a8a8" stroke-width="8" stroke-linecap="round" stroke-linejoin="round" opacity="1"/><path d="M327.0 233.0 C327.6 234.5 330.0 240.5 330.6 242.0" fill="none" stroke="#a8a8a8" stroke-width="8" stroke-linecap="round" stroke-linejoin="round" opacity="1"/><path d="M332.4 240.0 C333.0 241.2 335.4 246.2 336.0 247.5" fill="none" stroke="#a8a8a8" stroke-width="8" stroke-linecap="round" stroke-linejoin="round" opacity="1"/><path d="M337.8 244.0 C338.4 244.8 340.8 248.2 341.4 249.0" fill="none" stroke="#a8a8a8" stroke-width="8" stroke-linecap="round" stroke-linejoin="round" opacity="1"/><path d="M460.0 211.6 C460.3 212.8 461.6 217.6 461.9 218.8" fill="none" stroke="#a8a8a8" stroke-width="8" stroke-linecap="round" stroke-linejoin="round" opacity="1"/><path d="M458.0 190.0 C458.3 190.9 459.7 194.5 460.0 195.4" fill="none" stroke="#a8a8a8" stroke-width="8" stroke-linecap="round" stroke-linejoin="round" opacity="1"/><path d="M261.7 275.8 C262.8 274.6 265.2 270.6 268.4 268.4 C271.6 266.1 276.6 263.6 280.7 262.3 C284.8 261.0 288.9 260.5 293.0 260.4 C297.1 260.3 301.4 260.6 305.3 261.7 C309.2 262.8 313.2 265.0 316.3 267.2 C319.4 269.4 321.8 272.3 323.7 274.6 C325.6 276.9 326.7 278.8 328.0 281.0 C329.3 283.2 330.8 285.6 331.5 288.0 C332.2 290.4 332.6 293.0 332.3 295.5 C332.0 298.0 331.3 301.0 329.9 302.8 C328.5 304.6 326.0 305.5 323.7 306.5 C321.4 307.5 318.4 308.2 316.0 309.0 C313.6 309.8 312.2 310.8 309.0 311.4 C305.8 312.0 300.6 312.7 296.7 312.7 C292.8 312.7 288.9 312.4 285.6 311.4 C282.3 310.4 279.1 308.9 277.0 306.5 C274.9 304.1 273.9 300.0 273.3 296.7 C272.7 293.4 272.4 290.0 273.3 286.9 C274.2 283.8 278.0 279.7 278.9 278.3" fill="none" stroke="#a8a8a8" stroke-width="8" stroke-linecap="round" stroke-linejoin="round" opacity="1"/><path d="M285.6 286.9 C285.5 288.9 284.6 295.3 285.0 299.0 C285.4 302.7 287.5 307.3 288.0 309.0" fill="none" stroke="#a8a8a8" stroke-width="8" stroke-linecap="round" stroke-linejoin="round" opacity="1"/><path d="M297.9 286.9 C297.8 288.9 296.7 295.3 297.3 299.0 C297.9 302.7 300.9 307.3 301.6 309.0" fill="none" stroke="#a8a8a8" stroke-width="8" stroke-linecap="round" stroke-linejoin="round" opacity="1"/><path d="M311.4 284.4 C312.4 285.8 316.2 289.5 317.6 293.0 C319.0 296.5 319.6 303.2 320.0 305.3" fill="none" stroke="#a8a8a8" stroke-width="8" stroke-linecap="round" stroke-linejoin="round" opacity="1"/><path d="M261.7 275.8 C261.2 276.8 259.3 279.8 258.6 282.0 C257.9 284.2 257.6 288.1 257.4 289.3" fill="none" stroke="#a8a8a8" stroke-width="8" stroke-linecap="round" stroke-linejoin="round" opacity="1"/><path d="M194.7 301.8 C212.2 297.9 265.8 285.8 300.0 278.5 C334.2 271.2 370.0 264.4 400.0 258.0 C430.0 251.6 456.4 244.7 480.0 240.0 C503.6 235.3 531.2 231.4 541.4 229.7" fill="none" stroke="#a8a8a8" stroke-width="8" stroke-linecap="round" stroke-linejoin="round" opacity="1"/><path d="M194.7 301.8 C212.2 298.8 265.8 289.8 300.0 283.5 C334.2 277.2 370.0 270.1 400.0 264.0 C430.0 257.9 456.4 252.6 480.0 246.9 C503.6 241.2 531.2 232.6 541.4 229.7" fill="none" stroke="#a8a8a8" stroke-width="8" stroke-linecap="round" stroke-linejoin="round" opacity="1"/><path d="M194.7 301.8 C195.1 306.0 195.5 317.4 197.2 326.9 C198.8 336.4 200.9 347.8 204.6 358.8 C208.3 369.9 213.4 382.8 219.3 393.2 C225.2 403.6 232.6 411.4 240.0 421.0 C247.4 430.6 256.5 442.0 264.0 451.0 C271.5 460.0 279.2 468.7 285.0 475.0 C290.8 481.3 296.3 486.3 298.6 488.6" fill="none" stroke="#a8a8a8" stroke-width="8" stroke-linecap="round" stroke-linejoin="round" opacity="1"/><path d="M298.6 488.6 C308.8 487.6 339.8 485.4 360.0 482.6 C380.2 479.8 400.0 476.0 420.0 472.0 C440.0 468.0 463.2 463.6 480.0 458.6 C496.8 453.6 514.0 444.8 520.8 442.0" fill="none" stroke="#a8a8a8" stroke-width="8" stroke-linecap="round" stroke-linejoin="round" opacity="1"/><path d="M300 489 L304.6 503.6 M520.8 442 L520.8 460" stroke="#a8a8a8" stroke-width="8" fill="none"/><path d="M304.6 503.6 C313.8 502.8 340.8 501.8 360.0 499.0 C379.2 496.2 400.0 491.5 420.0 487.0 C440.0 482.5 463.2 476.7 480.0 472.0 C496.8 467.3 514.0 461.2 520.8 459.0" fill="none" stroke="#a8a8a8" stroke-width="8" stroke-linecap="round" stroke-linejoin="round" opacity="1"/><path d="M541.4 229.7 C542.8 235.0 548.0 250.6 550.0 261.6 C552.0 272.7 553.3 286.2 553.7 296.0 C554.1 305.8 553.1 313.3 552.5 320.6 C551.9 327.9 551.0 332.3 550.0 340.0 C549.0 347.7 548.1 357.1 546.3 366.9 C544.5 376.7 541.9 389.4 539.0 398.8 C536.1 408.2 532.0 416.2 529.0 423.4 C526.0 430.6 522.2 438.9 520.8 442.0" fill="none" stroke="#a8a8a8" stroke-width="8" stroke-linecap="round" stroke-linejoin="round" opacity="1"/><path d="M550.5 262.0 C551.6 261.7 554.4 261.5 557.0 260.0 C559.6 258.5 562.5 256.2 566.0 253.0 C569.5 249.8 573.2 244.5 578.0 241.0 C582.8 237.5 588.8 233.8 595.0 232.0 C601.2 230.2 608.7 228.7 615.0 230.0 C621.3 231.3 628.0 235.3 633.0 240.0 C638.0 244.7 642.1 250.5 645.0 258.0 C647.9 265.5 650.0 275.5 650.5 285.0 C651.0 294.5 649.8 306.5 648.0 315.0 C646.2 323.5 643.3 329.5 640.0 336.0 C636.7 342.5 632.5 348.0 628.0 354.0 C623.5 360.0 619.8 366.8 612.7 371.8 C605.6 376.8 594.2 380.3 585.6 384.0 C577.0 387.7 568.4 389.8 561.0 393.9 C553.6 398.0 546.3 404.5 541.4 408.6 C536.5 412.7 533.2 416.9 531.6 418.5" fill="none" stroke="#a8a8a8" stroke-width="8" stroke-linecap="round" stroke-linejoin="round" opacity="1"/><path d="M553.7 296.0 C554.5 293.9 556.6 286.8 558.6 283.7 C560.6 280.6 564.8 278.6 566.0 277.6" fill="none" stroke="#a8a8a8" stroke-width="8" stroke-linecap="round" stroke-linejoin="round" opacity="1"/><circle cx="566" cy="278" r="1" fill="#222"/></g><path d="M26 5.5 L77 16 L72.5 45 L18.5 40 z" fill="none" stroke="#444" stroke-width="1.3" stroke-dasharray="2.5 1.2"/></svg>
<div class="t" style="left:888px;top:117px;font-size:5.5px;color:#d0d0d0;">100%</div>
<div class="a" style="left:910px;top:118px;width:90px;height:3px;background:#2a2a2a;"></div>
<div class="a" style="left:910px;top:118px;width:27px;height:2px;background:#7aa0cc;"></div>
<div class="a" style="left:936px;top:116px;width:4px;height:6px;background:#555;"></div>
<div class="a" style="left:995px;top:114px;width:5px;height:9px;background:#e8e8e8;"></div>
<svg class="a" style="left:862px;top:130px;" width="9" height="8" viewBox="0 0 9 8"><rect x="0.5" y="0.5" width="8" height="7" fill="none" stroke="#ccc" stroke-width="0.9"/><path d="M0.5 3h8 M3 0.5v7" stroke="#ccc" stroke-width="0.8"/></svg>
<div class="a" style="left:875px;top:130px;width:123px;height:9px;background:#2d2d2d;"></div>
<div class="a" style="left:875px;top:130px;width:59px;height:9px;background:#4a6d96;"></div>
<div class="t" style="left:916px;top:132px;font-size:5.4px;color:#e0e0e0;">Rotation: 11.70°</div>
<div class="a" style="left:930px;top:142px;width:10px;height:1px;background:#666;"></div>
<div class="a" style="left:860px;top:145px;width:136px;height:1px;background:#444;"></div>
<div class="a" style="left:860px;top:146px;width:28px;height:11px;background:#3a3a3a;border:1px solid #4a4a4a;border-bottom:none"></div>
<div class="t" style="left:866px;top:149px;font-size:5.5px;color:#d8d8d8;">Layers</div>
<div class="a" style="left:890px;top:146px;width:42px;height:11px;background:#373737;border:1px solid #333;border-bottom:none"></div>
<div class="t" style="left:894px;top:149px;font-size:5.5px;color:#d0d0d0;">Compositions</div>
<div class="a" style="left:934px;top:146px;width:42px;height:11px;background:#373737;border:1px solid #333;border-bottom:none"></div>
<div class="t" style="left:938px;top:149px;font-size:5.5px;color:#d0d0d0;">Undo History</div>
<div class="a" style="left:860px;top:157px;width:140px;height:1px;background:#4a4a4a;"></div>
<div class="t" style="left:861px;top:160.5px;font-size:5.5px;color:#d0d0d0;">Layers</div>
<svg class="a" style="left:992px;top:160px;" width="8" height="7" viewBox="0 0 8 7"><path d="M0.5 0.5h5v6h-5z" fill="none" stroke="#777"/></svg>
<div class="a" style="left:861px;top:169.5px;width:121px;height:10px;background:#333;border:1px solid #2c2c2c"></div>
<div class="t" style="left:863px;top:172px;font-size:5.5px;color:#d0d0d0;">Normal</div>
<svg class="a" style="left:974px;top:173px;" width="5" height="4" viewBox="0 0 5 4"><path d="M0.5 0.5 L2.5 3 L4.5 0.5z" fill="#bbb"/></svg>
<div class="a" style="left:984px;top:169.5px;width:13px;height:10px;background:#383838;border:1px solid #2c2c2c"></div>
<svg class="a" style="left:986px;top:171px;" width="9" height="7" viewBox="0 0 9 7"><path d="M0.5 0.5 H8 L5 4 V7 L3.5 6 V4z" fill="none" stroke="#ccc" stroke-width="0.9"/></svg>
<div class="a" style="left:861px;top:181px;width:119px;height:14px;background:#4a6d96;border:1px solid #3a4f66"></div>
<div class="t" style="left:905px;top:185px;font-size:5.5px;color:#e6e6e6;">Opacity: 100%</div>
<svg class="a" style="left:982px;top:182px;" width="5" height="12" viewBox="0 0 5 12"><path d="M0.5 4 l2-2.5 2 2.5z M0.5 8 l2 2.5 2-2.5z" fill="#ccc"/></svg>
<div class="a" style="left:989px;top:181px;width:11px;height:14px;background:#3a3a3a;border:1px solid #2c2c2c"></div>
<svg class="a" style="left:991px;top:184px;" width="9" height="8" viewBox="0 0 9 8"><rect x="0.5" y="0.5" width="8" height="7" fill="none" stroke="#ddd" stroke-width="0.9"/><path d="M2 3 h6" stroke="#ddd"/></svg>
<div class="a" style="left:860px;top:196px;width:140px;height:186px;background:#313131;"></div>
<div class="a" style="left:893px;top:197px;width:107px;height:14px;background:#4a6d96;"></div>
<div class="a" style="left:974px;top:197px;width:26px;height:14px;background:#3f5f84;"></div>
<svg class="a" style="left:862px;top:200.5px;" width="9" height="7" viewBox="0 0 9 7"><path d="M0.5 3.5 Q4.5 -1 8.5 3.5 Q4.5 7.5 0.5 3.5z" fill="#f0f0f0"/><circle cx="4.5" cy="3.5" r="1.6" fill="#2c2c2c"/><path d="M1 5.5 Q4.5 8 8 5.5" fill="none" stroke="#ddd" stroke-width="0.8"/></svg>
<div class="a" style="left:874px;top:198px;width:12px;height:11px;background:#f4f4f4;"></div>
<svg class="a" style="left:874px;top:198px;" width="12" height="11" viewBox="0 0 12 11"><path d="M3 8 Q6 3 9 6 M4 4 Q6 2 8 4" fill="none" stroke="#aaa" stroke-width="0.6"/></svg>
<svg class="a" style="left:888px;top:198px;" width="5" height="5" viewBox="0 0 5 5"><rect x="0.5" y="0.5" width="4" height="3.5" fill="none" stroke="#ccc" stroke-width="0.8"/></svg>
<div class="t" style="left:896px;top:201.5px;font-size:6px;color:#e8e8e8;font-weight:bold">Paint Layer 2</div>
<svg class="a" style="left:975px;top:200px;" width="25" height="8" viewBox="0 0 25 8"><path d="M2 7 V4 M4 7 V3 M6 7 V5" stroke="#aaa" stroke-width="1"/><path d="M14 2 Q10 4 14 7 M12 2 Q16 4 12 7" fill="none" stroke="#bbb" stroke-width="0.9"/><path d="M22 1 l3 3 -3 3" fill="none" stroke="#bbb" stroke-width="0.9"/></svg>
<svg class="a" style="left:862px;top:214.5px;" width="9" height="7" viewBox="0 0 9 7"><path d="M0.5 3.5 Q4.5 -1 8.5 3.5 Q4.5 7.5 0.5 3.5z" fill="#f0f0f0"/><circle cx="4.5" cy="3.5" r="1.6" fill="#2c2c2c"/><path d="M1 5.5 Q4.5 8 8 5.5" fill="none" stroke="#ddd" stroke-width="0.8"/></svg>
<div class="a" style="left:874px;top:212px;width:12px;height:11px;background:#f4f4f4;"></div>
<svg class="a" style="left:874px;top:212px;" width="12" height="11" viewBox="0 0 12 11"><path d="M3 8 Q6 3 9 6 M4 4 Q6 2 8 4" fill="none" stroke="#aaa" stroke-width="0.6"/></svg>
<svg class="a" style="left:888px;top:212px;" width="5" height="5" viewBox="0 0 5 5"><rect x="0.5" y="0.5" width="4" height="3.5" fill="none" stroke="#ccc" stroke-width="0.8"/></svg>
<div class="t" style="left:896px;top:215.5px;font-size:6px;color:#d8d8d8;">Paint Layer 1</div>
<svg class="a" style="left:975px;top:214px;" width="25" height="8" viewBox="0 0 25 8"><path d="M2 7 V4 M4 7 V3 M6 7 V5" stroke="#aaa" stroke-width="1"/><path d="M14 2 Q10 4 14 7 M12 2 Q16 4 12 7" fill="none" stroke="#bbb" stroke-width="0.9"/><path d="M22 1 l3 3 -3 3" fill="none" stroke="#bbb" stroke-width="0.9"/></svg>
<svg class="a" style="left:862px;top:228.5px;" width="9" height="7" viewBox="0 0 9 7"><path d="M0.5 3.5 Q4.5 -1 8.5 3.5 Q4.5 7.5 0.5 3.5z" fill="#f0f0f0"/><circle cx="4.5" cy="3.5" r="1.6" fill="#2c2c2c"/><path d="M1 5.5 Q4.5 8 8 5.5" fill="none" stroke="#ddd" stroke-width="0.8"/></svg>
<div class="a" style="left:874px;top:226px;width:12px;height:11px;background:#f4f4f4;"></div>
<svg class="a" style="left:888px;top:226px;" width="5" height="5" viewBox="0 0 5 5"><rect x="0.5" y="0.5" width="4" height="3.5" fill="none" stroke="#ccc" stroke-width="0.8"/></svg>
<div class="t" style="left:896px;top:229.5px;font-size:6px;color:#d8d8d8;">Background</div>
<svg class="a" style="left:975px;top:228px;" width="25" height="8" viewBox="0 0 25 8"><path d="M2 7 V4 M4 7 V3 M6 7 V5" stroke="#aaa" stroke-width="1"/><path d="M14 2 Q10 4 14 7 M12 2 Q16 4 12 7" fill="none" stroke="#bbb" stroke-width="0.9"/><path d="M22 1 l3 3 -3 3" fill="none" stroke="#bbb" stroke-width="0.9"/></svg>
<div class="a" style="left:975px;top:228px;width:6px;height:8px;background:#000;"></div>
<svg class="a" style="left:975px;top:226px;" width="7" height="10" viewBox="0 0 7 10"><path d="M1.5 4 V2.5 Q3.5 0 5.5 2.5 V4" fill="none" stroke="#f0f0f0" stroke-width="1"/><rect x="0.5" y="4" width="6" height="5" fill="#f0f0f0"/></svg>
<div class="a" style="left:856px;top:382px;width:144px;height:163px;background:#414141;"></div>
<svg class="a" style="left:862px;top:385px;" width="9" height="10" viewBox="0 0 9 10"><rect x="0.7" y="0.7" width="7.6" height="8.6" fill="none" stroke="#e0e0e0" stroke-width="1.2"/><path d="M2.5 5h4 M4.5 3v4" stroke="#e0e0e0" stroke-width="1"/></svg>
<svg class="a" style="left:875px;top:388px;" width="3" height="2" viewBox="0 0 3 2"><path d="M0 0h3l-1.5 2z" fill="#aaa"/></svg>
<svg class="a" style="left:884px;top:384px;" width="10" height="11" viewBox="0 0 10 11"><rect x="3.5" y="0.7" width="5.8" height="7" fill="none" stroke="#e0e0e0" stroke-width="1.2"/><path d="M2 3 V9.5 H7" fill="none" stroke="#e0e0e0" stroke-width="1.2"/></svg>
<svg class="a" style="left:900px;top:387px;" width="9" height="6" viewBox="0 0 9 6"><path d="M0.8 0.8 L4.5 4.8 L8.2 0.8" fill="none" stroke="#e4e4e4" stroke-width="1.4"/></svg>
<svg class="a" style="left:917px;top:386px;" width="9" height="6" viewBox="0 0 9 6"><path d="M0.8 5 L4.5 1 L8.2 5" fill="none" stroke="#e4e4e4" stroke-width="1.4"/></svg>
<svg class="a" style="left:934px;top:384px;" width="9" height="10" viewBox="0 0 9 10"><path d="M0 2h9 M0 5h9 M0 8h9" stroke="#e0e0e0" stroke-width="1.2"/><rect x="5" y="1" width="2" height="2" fill="#414141" stroke="#e0e0e0" stroke-width="0.8"/><rect x="2" y="7" width="2" height="2" fill="#414141" stroke="#e0e0e0" stroke-width="0.8"/></svg>
<svg class="a" style="left:994px;top:384px;" width="6" height="10" viewBox="0 0 6 10"><rect x="0.5" y="2.5" width="6" height="7" fill="#e8e8e8"/><rect x="0.5" y="0.5" width="6" height="1.5" fill="#ccc"/></svg>
<div class="a" style="left:929px;top:400px;width:10px;height:1px;background:#666;"></div>
<div class="t" style="left:862px;top:404.5px;font-size:5.4px;color:#cfcfcf;">Tool Options</div>
<div class="a" style="left:997px;top:402px;width:3px;height:8px;background:#444;"></div>
<div class="t" style="left:862px;top:420px;font-size:5.4px;color:#d0d0d0;">Brush Smoothing:</div>
<div class="a" style="left:921px;top:417px;width:79px;height:11px;background:#383838;border:1px solid #303030"></div>
<div class="t" style="left:922px;top:420.5px;font-size:5.4px;color:#d0d0d0;">Basic</div>
<svg class="a" style="left:996px;top:421px;" width="4" height="3" viewBox="0 0 4 3"><path d="M0 0h4l-2 3z" fill="#bbb"/></svg>
<div class="a" style="left:861px;top:431px;width:139px;height:1px;background:#9a9a9a;"></div>
<div class="a" style="left:862px;top:437px;width:7px;height:7px;background:#2e2e2e;border:1px solid #333"></div>
<div class="t" style="left:872px;top:438.5px;font-size:5.4px;color:#d0d0d0;">Snap to Assistants</div>
</body></html>
